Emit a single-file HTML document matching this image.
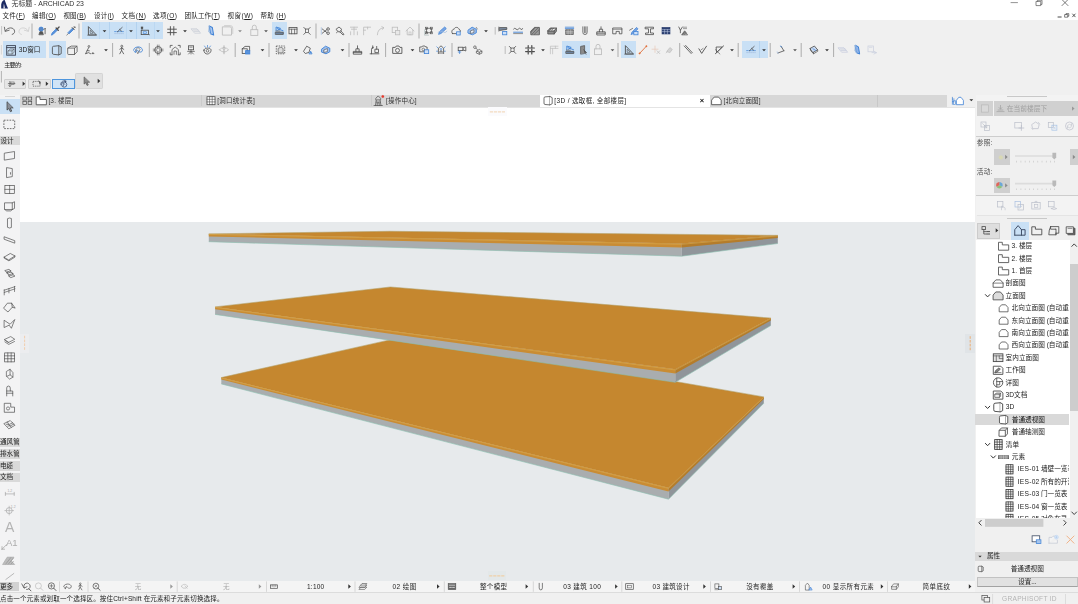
<!DOCTYPE html>
<html lang="zh"><head><meta charset="utf-8"><title>无标题 - ARCHICAD 23</title>
<style>
html,body{margin:0;padding:0;}
body{width:1078px;height:604px;overflow:hidden;position:relative;background:#f0f0f0;font-family:"Liberation Sans","Noto Sans CJK SC",sans-serif;}
body>div,#tx>div{position:absolute;box-sizing:border-box;}
#tx{left:0;top:0;width:1078px;height:604px;will-change:transform;}
.t{white-space:nowrap;line-height:12px;height:12px;letter-spacing:0;}
svg{position:absolute;left:0;top:0;}
</style></head><body>
<div style="left:0px;top:0px;width:1078px;height:20px;background:#ffffff;"></div>
<div style="left:0px;top:20px;width:1078px;height:75px;background:#f0f0f0;"></div>
<div style="left:0px;top:94.6px;width:946.5px;height:12.6px;background:#d7d7d7;"></div>
<div style="left:946.5px;top:94.6px;width:29px;height:12.6px;background:#f0f0f0;"></div>
<div style="left:0px;top:94.6px;width:19.5px;height:486px;background:#f3f3f4;"></div>
<div style="left:19.5px;top:107px;width:955.7px;height:115px;background:#ffffff;"></div>
<div style="left:19.5px;top:222.2px;width:955.7px;height:358.4px;background:#e7eaec;"></div>
<div style="left:975.2px;top:94.6px;width:103px;height:510px;background:#f0f0f0;"></div>
<div style="left:0px;top:580.6px;width:975.2px;height:11.7px;background:#f4f4f4;"></div>
<div style="left:0px;top:593px;width:1078px;height:11px;background:#f0f0f0;"></div>
<div style="left:82px;top:21.8px;width:81.3px;height:17.4px;background:#c9e0f5;"></div>
<div style="left:109.4px;top:21.8px;width:0.6px;height:17.4px;background:#b3d2ef;"></div>
<div style="left:136.4px;top:21.8px;width:0.6px;height:17.4px;background:#b3d2ef;"></div>
<div style="left:99.4px;top:21.8px;width:0.6px;height:17.4px;background:#bcd8f2;"></div>
<div style="left:126.4px;top:21.8px;width:0.6px;height:17.4px;background:#bcd8f2;"></div>
<div style="left:153.6px;top:21.8px;width:0.6px;height:17.4px;background:#bcd8f2;"></div>
<div style="left:272px;top:21.8px;width:14.9px;height:17px;background:#c9e0f5;"></div>
<div style="left:3.4px;top:41.3px;width:42.4px;height:17.2px;background:#c9e0f5;"></div>
<div style="left:49.2px;top:41.3px;width:16.4px;height:17.2px;background:#c9e0f5;"></div>
<div style="left:562px;top:41.3px;width:28px;height:17.2px;background:#c9e0f5;"></div>
<div style="left:621px;top:41.3px;width:14.8px;height:17.2px;background:#c9e0f5;"></div>
<div style="left:742px;top:41.3px;width:26.2px;height:17.2px;background:#c9e0f5;"></div>
<div style="left:759.3px;top:41.3px;width:0.6px;height:17.2px;background:#b3d2ef;"></div>
<div style="left:4.3px;top:79px;width:22.2px;height:10px;background:#e6e6e6;border:0.6px solid #cfcfcf;border-radius:1px;"></div>
<div style="left:28.2px;top:79px;width:22.5px;height:10px;background:#e6e6e6;border:0.6px solid #cfcfcf;border-radius:1px;"></div>
<div style="left:52px;top:78.8px;width:22.9px;height:10.3px;background:#d0e4f7;border:0.8px solid #4f96dd;"></div>
<div style="left:75.1px;top:73.1px;width:27.6px;height:16.4px;background:#e1e1e1;border:0.6px solid #d4d4d4;border-radius:1.2px;"></div>
<div style="left:540px;top:94.6px;width:170.4px;height:12.6px;background:#ffffff;"></div>
<div style="left:877.3px;top:94.6px;width:0.6px;height:12.6px;background:#c8c8c8;"></div>
<div style="left:201.3px;top:95.4px;width:0.5px;height:11px;background:#cbcbcb;"></div>
<div style="left:371px;top:95.4px;width:0.5px;height:11px;background:#cbcbcb;"></div>
<div style="left:19.5px;top:106.9px;width:955.7px;height:0.5px;background:#e4e4e4;"></div>
<div style="left:488.2px;top:107.2px;width:18.4px;height:9.2px;background:#fbfbfd;"></div>
<div style="left:487.6px;top:571.1999999999999px;width:18.4px;height:9.2px;background:#e3e8e9;"></div>
<div style="left:19.700000000000003px;top:334.0px;width:9.8px;height:18.6px;background:#ecedef;"></div>
<div style="left:965.3000000000001px;top:334.40000000000003px;width:9.8px;height:18.6px;background:#e0e4e7;"></div>
<div style="left:4.5px;top:95.8px;width:10px;height:0.7px;background:#d6d6d6;"></div>
<div style="left:0px;top:99.4px;width:19.5px;height:15px;background:#c9e0f5;"></div>
<div style="left:0px;top:136.3px;width:19.5px;height:8.6px;background:#d9d9d9;"></div>
<div style="left:0px;top:437.6px;width:19.5px;height:9.5px;background:#d9d9d9;"></div>
<div style="left:0px;top:449.3px;width:19.5px;height:9.5px;background:#d9d9d9;"></div>
<div style="left:0px;top:461.1px;width:19.5px;height:9.5px;background:#d9d9d9;"></div>
<div style="left:0px;top:472.6px;width:19.5px;height:9.5px;background:#d9d9d9;"></div>
<div style="left:0px;top:581.7px;width:19px;height:9.8px;background:#d2d2d2;"></div>
<div style="left:0px;top:592.1px;width:975.2px;height:0.6px;background:#dcdcdc;"></div>
<div style="left:975.6px;top:94.6px;width:102.4px;height:41.4px;background:#f3f3f3;"></div>
<div style="left:975.6px;top:195.9px;width:102.4px;height:19.4px;background:#f3f3f3;"></div>
<div style="left:1007.2px;top:96.2px;width:40px;height:0.8px;background:#c8c8c8;"></div>
<div style="left:977px;top:101.2px;width:16px;height:14.6px;background:#d2d2d2;"></div>
<div style="left:994px;top:101.2px;width:84px;height:14.6px;background:#d0d0d0;"></div>
<div style="left:975.6px;top:136px;width:102.4px;height:0.8px;background:#cdcdcd;"></div>
<div style="left:994px;top:149.2px;width:16px;height:15.6px;background:#cfcfcf;"></div>
<div style="left:1070px;top:149.2px;width:8px;height:15.6px;background:#cfcfcf;"></div>
<div style="left:994px;top:177.6px;width:16px;height:15.6px;background:#cfcfcf;"></div>
<div style="left:975.6px;top:195.1px;width:102.4px;height:0.8px;background:#cdcdcd;"></div>
<div style="left:976.5px;top:215.2px;width:101.5px;height:0.6px;background:#e4e4e4;"></div>
<div style="left:1007.2px;top:218px;width:40px;height:0.8px;background:#c8c8c8;"></div>
<div style="left:976.6px;top:222.6px;width:23.4px;height:16px;background:#dedede;border:0.6px solid #cccccc;"></div>
<div style="left:1011px;top:222px;width:17.6px;height:17.8px;background:#c9e0f5;"></div>
<div style="left:976px;top:239.8px;width:93.6px;height:278.4px;background:#ffffff;"></div>
<div style="left:1069.6px;top:239.8px;width:8.4px;height:278.4px;background:#f0f0f0;"></div>
<div style="left:1070.4px;top:264px;width:7.6px;height:147.4px;background:#cdcdcd;"></div>
<div style="left:975.2px;top:414px;width:94.3px;height:11.3px;background:#d9d9d9;"></div>
<div style="left:975.2px;top:552.4px;width:103px;height:8.2px;background:#d9d9d9;"></div>
<div style="left:976.6px;top:576.6px;width:101.4px;height:10.9px;background:#e1e1e1;border:0.6px solid #c2c2c2;border-bottom:0.8px solid #a2a2a2;"></div>
<div style="left:975.2px;top:592.3px;width:103px;height:0.5px;background:#dcdcdc;"></div>
<svg width="1078" height="604" viewBox="0 0 1078 604">
<g transform="translate(4.5,4.5)"><path d="M-3.3,4 L-3.3,0 Q-2.5,-4.5 0.2,-4.5 L2.2,1 L3.6,4 Z" fill="#1c2a63"/><path d="M-1.2,4 L-0.6,-1 L0.6,4Z" fill="#fff" opacity="0.85"/></g>
<path d="M1011,2.6 H1017.5" stroke="#666" stroke-width="0.7" fill="none" stroke-linejoin="round" stroke-linecap="round" />
<path d="M1036.4,1.4 H1040.8 V5.6 H1036.4 Z M1037.6,1.4 V0.2 H1042 V4.4 H1040.8" stroke="#555" stroke-width="0.7" fill="none" stroke-linejoin="round" stroke-linecap="round" />
<path d="M1062,-0.4 L1068,5.6 M1068,-0.4 L1062,5.6" stroke="#444" stroke-width="0.7" fill="none" stroke-linejoin="round" stroke-linecap="round" />
<path d="M1058,17 H1061.2" stroke="#333" stroke-width="0.9" fill="none" stroke-linejoin="round" stroke-linecap="round" />
<path d="M1065,14.6 H1067.8 V17.2 H1065 Z M1066,14.6 V13.6 H1068.8 V16.2 H1067.8" stroke="#333" stroke-width="0.6" fill="none" stroke-linejoin="round" stroke-linecap="round" />
<path d="M1072.6,14 L1075.2,16.8 M1075.2,14 L1072.6,16.8" stroke="#333" stroke-width="0.8" fill="none" stroke-linejoin="round" stroke-linecap="round" />
<line x1="1.6" y1="26" x2="1.6" y2="34.5" stroke="#a8a8a8" stroke-width="0.6"/>
<g transform="translate(9.6,30.6)"><path d="M-5.2,-3.4 L-4.4,0.8 L-0.4,-0.4 M-4.2,0.4 C-2,-4 4.6,-3.6 5,0.6 C5.2,2.4 4,3.4 2.6,3.8" stroke="#4d4d4d" stroke-width="0.8" fill="none" stroke-linejoin="round" stroke-linecap="round" /></g>
<g transform="translate(24,30.6)"><path d="M5.2,-3.4 L4.4,0.8 L0.4,-0.4 M4.2,0.4 C2,-4 -4.6,-3.6 -5,0.6 C-5.2,2.4 -4,3.4 -2.6,3.8" stroke="#cbcbcb" stroke-width="0.8" fill="none" stroke-linejoin="round" stroke-linecap="round" /></g>
<line x1="32" y1="23.5" x2="32" y2="38.5" stroke="#808080" stroke-width="0.6"/>
<g transform="translate(42.5,30.8)"><circle cx="-1.4" cy="-1.6" r="2.1" stroke="#3f82d6" stroke-width="0.9" fill="#5a88c4"/><path d="M-3.5,3.6 L-2.6,1 L0,1 L0.8,3.6 Z" stroke="#4d4d4d" stroke-width="0.7" fill="#555" stroke-linejoin="round" stroke-linecap="round" /><path d="M2.6,-2.4 V3 M1.6,-1.4 L2.6,-2.4" stroke="#4d4d4d" stroke-width="0.8" fill="none" stroke-linejoin="round" stroke-linecap="round" /></g>
<g transform="translate(55.5,30.8)"><path d="M-4,4 L-3.4,2.2 L1,-2.2 L2.2,-1 L-2.2,3.4 Z" stroke="#3f82d6" stroke-width="0.8" fill="#5b93dc" stroke-linejoin="round" stroke-linecap="round" /><path d="M0.6,-2.8 L2.8,-0.6 M1.6,-1.8 L3.6,-3.8" stroke="#4d4d4d" stroke-width="1.3" fill="none" stroke-linejoin="round" stroke-linecap="round" /></g>
<g transform="translate(71,30.8)"><path d="M-4.2,4.2 L-2.4,2.4" stroke="#4d4d4d" stroke-width="0.7" fill="none" stroke-linejoin="round" stroke-linecap="round" /><path d="M-2.8,1.6 L1.4,-2.6 L2.6,-1.4 L-1.6,2.8 Z" stroke="#3f82d6" stroke-width="0.8" fill="#5b93dc" stroke-linejoin="round" stroke-linecap="round" /><path d="M1,-3.4 L3.4,-1 M2.2,-2.2 L3.8,-3.8 M3,-4.4 L4.4,-3" stroke="#4d4d4d" stroke-width="0.8" fill="none" stroke-linejoin="round" stroke-linecap="round" /></g>
<line x1="79" y1="23.5" x2="79" y2="38.5" stroke="#808080" stroke-width="0.6"/>
<g transform="translate(92,30.8)"><path d="M-3.6,3.8 L-3.6,-4.2 L4,3.8 Z" stroke="#4d4d4d" stroke-width="0.9" fill="none" stroke-linejoin="round" stroke-linecap="round" /><path d="M-1.8,2.2 L-1.8,-0.6 L0.9,2.2 Z" stroke="#4d4d4d" stroke-width="0.6" fill="none" stroke-linejoin="round" stroke-linecap="round" /><path d="M-4.4,4.4 H4.6" stroke="#4d4d4d" stroke-width="0.6" fill="none" stroke-linejoin="round" stroke-linecap="round" /></g>
<g transform="translate(104.5,31.2)"><path d="M-1.9,-1 L1.9,-1 L0,1 Z" fill="#333"/></g>
<g transform="translate(119,30.8)"><path d="M-4.4,0.8 H4.4" stroke="#3f82d6" stroke-width="0.7" fill="none" stroke-linejoin="round" stroke-linecap="round" stroke-dasharray="1.6 1"/><path d="M-4.4,2.8 H4.4" stroke="#9db9dd" stroke-width="0.6" fill="none" stroke-linejoin="round" stroke-linecap="round" stroke-dasharray="1 1"/><path d="M-1.6,1 L3.2,-3.4 M0.6,-1.4 L2.6,0.4" stroke="#4d4d4d" stroke-width="0.8" fill="none" stroke-linejoin="round" stroke-linecap="round" /></g>
<g transform="translate(131,31.2)"><path d="M-1.9,-1 L1.9,-1 L0,1 Z" fill="#333"/></g>
<g transform="translate(145,30.8)"><rect x="-3.8" y="-0.6" width="7.2" height="4.4" stroke="#4d4d4d" stroke-width="0.8" fill="none" /><rect x="-3.8" y="-3.8" width="1.6" height="1.6" stroke="#4d4d4d" stroke-width="0.7" fill="#4d4d4d" /><path d="M-3,-2.2 V-0.6" stroke="#4d4d4d" stroke-width="0.7" fill="none" stroke-linejoin="round" stroke-linecap="round" /><rect x="-1.8" y="1" width="3.4" height="1.6" stroke="#3f82d6" stroke-width="0.6" fill="none" /><path d="M3.8,3.6 L4.6,4" stroke="#4d4d4d" stroke-width="0.6" fill="none" stroke-linejoin="round" stroke-linecap="round" /></g>
<g transform="translate(158,31.2)"><path d="M-1.9,-1 L1.9,-1 L0,1 Z" fill="#333"/></g>
<g transform="translate(172,30.8)"><path d="M-1.6,-4.2 V4.2 M1.8,-4.2 V4.2 M-4.4,-1.6 H4.4 M-4.4,1.8 H4.4" stroke="#4d4d4d" stroke-width="0.9" fill="none" stroke-linejoin="round" stroke-linecap="round" /></g>
<g transform="translate(185,31.2)"><path d="M-1.9,-1 L1.9,-1 L0,1 Z" fill="#333"/></g>
<g transform="translate(196,30.8)"><path d="M-4.6,-2 L1,-2 L4.6,2.4 L-1,2.4 Z M-3,-0.8 L2,-0.8 M-1.8,0.6 L3.2,0.6" stroke="#c7cbd6" stroke-width="0.7" fill="none" stroke-linejoin="round" stroke-linecap="round" /></g>
<g transform="translate(211.3,30.6) scale(1.3)"><path d="M-1.6,-3.6 L0.8,-2.4 L1.8,3.4 L-0.6,2.4 Z" stroke="#3f82d6" stroke-width="0.8" fill="#a9c6ee" stroke-linejoin="round" stroke-linecap="round" /><path d="M-1.6,-3.6 L-2,1 L-0.6,2.4" stroke="#9db9dd" stroke-width="0.7" fill="none" stroke-linejoin="round" stroke-linecap="round" /></g>
<g transform="translate(227,30.6) scale(1.25)"><path d="M-3.4,-3 H2.4 Q3.6,-3 3.6,-1.8 V3.6 H-3.4 Z" stroke="#bdbdbd" stroke-width="0.7" fill="none" stroke-linejoin="round" stroke-linecap="round" /><path d="M-2,-4 H2.6 Q4.6,-4 4.6,-2 V2.4" stroke="#bdbdbd" stroke-width="0.5" fill="none" stroke-linejoin="round" stroke-linecap="round" /></g>
<g transform="translate(240,31.2)"><path d="M-1.9,-1 L1.9,-1 L0,1 Z" fill="#8a8a8a"/></g>
<g transform="translate(254.3,30.4) scale(1.25)"><rect x="-2.8" y="-0.6" width="5.6" height="4.6" stroke="#bdbdbd" stroke-width="0.7" fill="none" /><path d="M-1.6,-0.6 V-2.6 Q-1.6,-4.2 0,-4.2 Q1.6,-4.2 1.6,-2.6 V-0.6" stroke="#bdbdbd" stroke-width="0.7" fill="none" stroke-linejoin="round" stroke-linecap="round" /></g>
<g transform="translate(266,31.2)"><path d="M-1.9,-1 L1.9,-1 L0,1 Z" fill="#555"/></g>
<g transform="translate(279.5,30.8)"><path d="M-3.8,3.6 H3.8 V1.4 H-3.8 Z" stroke="#4d4d4d" stroke-width="0.8" fill="#6e87a6" stroke-linejoin="round" stroke-linecap="round" /><path d="M-3.4,-0.4 L-3.4,-3.8 L1,-2.4 L-1.8,-0.6 M-2,-2.2 L3.6,0" stroke="#3f82d6" stroke-width="0.9" fill="none" stroke-linejoin="round" stroke-linecap="round" /><path d="M-3.6,0.2 H0.4" stroke="#4d4d4d" stroke-width="0.7" fill="none" stroke-linejoin="round" stroke-linecap="round" /></g>
<g transform="translate(293,30.8)"><rect x="-4" y="-3.4" width="8" height="6.4" stroke="#4d4d4d" stroke-width="0.8" fill="none" /><path d="M-4,-1.6 H4 M-1.4,-1.6 V3 M1.6,-1.6 V3" stroke="#4d4d4d" stroke-width="0.7" fill="none" stroke-linejoin="round" stroke-linecap="round" /></g>
<g transform="translate(307,30.8)"><path d="M-3.2,-3.4 L-1.4,-1.6 M3.2,-3.4 L1.4,-1.6 M-3.2,3.6 L-1.4,1.8 M3.2,3.6 L1.4,1.8" stroke="#4d4d4d" stroke-width="0.8" fill="none" stroke-linejoin="round" stroke-linecap="round" /><rect x="-1.6" y="-1.8" width="3.2" height="3.6" stroke="#4d4d4d" stroke-width="0.7" fill="none" /></g>
<line x1="316" y1="23.5" x2="316" y2="38.5" stroke="#808080" stroke-width="0.6"/>
<g transform="translate(325.5,30.8)"><path d="M-4.2,-3.2 V3.6" stroke="#9db9dd" stroke-width="0.7" fill="none" stroke-linejoin="round" stroke-linecap="round" /><circle cx="2.6" cy="-1.8" r="1.3" stroke="#4d4d4d" stroke-width="0.8" fill="none"/><circle cx="2.6" cy="2.4" r="1.3" stroke="#4d4d4d" stroke-width="0.8" fill="none"/><path d="M1.4,-1.2 L-3.2,2.4 M1.4,1.8 L-3.2,-1.8" stroke="#4d4d4d" stroke-width="0.8" fill="none" stroke-linejoin="round" stroke-linecap="round" /></g>
<g transform="translate(340,30.8)"><path d="M-3.8,-1.6 L-1,-3.8 L2,-1.2 L-0.6,1.2 Z" stroke="#4d4d4d" stroke-width="0.8" fill="none" stroke-linejoin="round" stroke-linecap="round" /><path d="M0.8,0 L4,3.6 L3,4.2 L-0.2,1" stroke="#4d4d4d" stroke-width="0.8" fill="none" stroke-linejoin="round" stroke-linecap="round" /><path d="M-3.6,2 L-2,0.6" stroke="#4d4d4d" stroke-width="0.7" fill="none" stroke-linejoin="round" stroke-linecap="round" /></g>
<g transform="translate(354,30.8)"><path d="M-3.6,-3.6 H3.6 M-2.6,-1.6 H2.6 M0,-3.6 V4 M-3.4,4 V1 M3.4,4 V1" stroke="#bdbdbd" stroke-width="0.8" fill="none" stroke-linejoin="round" stroke-linecap="round" /></g>
<g transform="translate(367,30.8)"><path d="M-3.4,4 V-3.6 H3.6 M-3.4,-0.6 H-1.4 M0.6,-3.6 V-1.8" stroke="#bdbdbd" stroke-width="0.8" fill="none" stroke-linejoin="round" stroke-linecap="round" /></g>
<g transform="translate(381,30.8)"><path d="M-3.6,4 Q-3.4,-2.4 2.4,-3 M0.8,-4.2 L3,-3 L1.2,-1.4" stroke="#bdbdbd" stroke-width="0.8" fill="none" stroke-linejoin="round" stroke-linecap="round" /></g>
<g transform="translate(396,30.8)"><rect x="-3.8" y="-3.6" width="5.4" height="5.4" stroke="#bdbdbd" stroke-width="0.8" fill="none" /><rect x="-0.6" y="-0.4" width="4.4" height="4.4" stroke="#bdbdbd" stroke-width="0.8" fill="#e9e9e9" /></g>
<g transform="translate(410,30.8)"><path d="M-4,0.2 L0,-3.8 L4,0.2 M-2.8,-0.6 V4 H2.8 V-0.6" stroke="#bdbdbd" stroke-width="0.8" fill="none" stroke-linejoin="round" stroke-linecap="round" /><rect x="-1" y="1.2" width="2" height="2.8" stroke="#bdbdbd" stroke-width="0.6" fill="none" /></g>
<line x1="419" y1="23.5" x2="419" y2="38.5" stroke="#808080" stroke-width="0.6"/>
<g transform="translate(429,30.8)"><rect x="-2.4" y="-2.6" width="5" height="4.6" stroke="#4d4d4d" stroke-width="0.7" fill="none" /><rect x="-3.4" y="-3.6" width="2" height="2" stroke="#4d4d4d" stroke-width="0.6" fill="none" /><rect x="1.6" y="-3.6" width="2" height="2" stroke="#4d4d4d" stroke-width="0.6" fill="none" /><rect x="-3.4" y="1" width="2" height="2" stroke="#4d4d4d" stroke-width="0.6" fill="none" /><rect x="1.6" y="1" width="2" height="2" stroke="#4d4d4d" stroke-width="0.6" fill="none" /><path d="M-4.4,-1 V3.8 M-4.4,4.4 H-0.4" stroke="#9aa" stroke-width="0.5" fill="none" stroke-linejoin="round" stroke-linecap="round" /></g>
<g transform="translate(442.5,30.8)"><path d="M-3.8,3.2 L-2.8,0.6 L2.2,-3.8 L3.8,-2.2 L-1.2,2.4 Z" stroke="#3f82d6" stroke-width="0.8" fill="#7aa6e4" stroke-linejoin="round" stroke-linecap="round" /><path d="M-4.4,1.4 Q-2,-0.8 0.4,1 T4.4,0.6" stroke="#9db9dd" stroke-width="0.7" fill="none" stroke-linejoin="round" stroke-linecap="round" /></g>
<g transform="translate(456,30.8)"><path d="M-3.6,2.8 H1 M-3.6,2.8 C-5,0.6 -3.8,-1.6 -2,-1.4 C-1.6,-4 2.4,-4.2 3,-1.4 C4.8,-1 4.8,1 3.8,1.6" stroke="#4d4d4d" stroke-width="0.8" fill="none" stroke-linejoin="round" stroke-linecap="round" /><rect x="0.6" y="1" width="3.6" height="3.2" stroke="#3f82d6" stroke-width="0.8" fill="#cfe0f7" /></g>
<g transform="translate(472.5,30.8)"><path d="M-4.2,-0.8 L-0.4,-3.6 L3.8,-1.6 L3.8,2 L0,4 L-4.2,2.4 Z" stroke="#3f82d6" stroke-width="0.9" fill="#9dbfee" stroke-linejoin="round" stroke-linecap="round" /><path d="M-1.8,0 L1.4,-1.2 L1.4,1.8 L-1.8,2.6 Z" stroke="#4d4d4d" stroke-width="0.6" fill="#e8eef8" stroke-linejoin="round" stroke-linecap="round" /><path d="M3.8,-3.4 L4.8,-1.8" stroke="#4d4d4d" stroke-width="0.6" fill="none" stroke-linejoin="round" stroke-linecap="round" /></g>
<g transform="translate(486,31.2)"><path d="M-1.9,-1 L1.9,-1 L0,1 Z" fill="#333"/></g>
<line x1="495.2" y1="27" x2="495.2" y2="34.6" stroke="#9a9a9a" stroke-width="0.6"/>
<g transform="translate(503,30.8)"><path d="M-3.4,-3.2 L3.8,-3.2 L3.8,-1.4 L-3.4,-0.4 Z" stroke="#4d4d4d" stroke-width="0.8" fill="#7d8da3" stroke-linejoin="round" stroke-linecap="round" /><rect x="-0.4" y="0.6" width="4.2" height="3.4" stroke="#3f82d6" stroke-width="0.8" fill="#cfe0f7" /><path d="M-4.2,-3.8 V0.4" stroke="#4d4d4d" stroke-width="0.6" fill="none" stroke-linejoin="round" stroke-linecap="round" /></g>
<g transform="translate(518,30.8)"><path d="M-4.4,-1.8 Q-3.2,-3.4 -2,-1.8 T0.4,-1.8 T2.8,-1.8 T4.6,-2.2" stroke="#4d4d4d" stroke-width="0.8" fill="none" stroke-linejoin="round" stroke-linecap="round" /><path d="M-4.4,1.4 H4.6" stroke="#3f82d6" stroke-width="0.9" fill="none" stroke-linejoin="round" stroke-linecap="round" /><path d="M-4.4,2.8 H4.6" stroke="#4d4d4d" stroke-width="0.6" fill="none" stroke-linejoin="round" stroke-linecap="round" /></g>
<g transform="translate(535,30.8)"><path d="M-4.2,3.6 L-4.2,0.4 L-0.6,-3.4 L4.4,-3.4 L4.4,3.6 Z" stroke="#4d4d4d" stroke-width="0.8" fill="#9a9a9a" stroke-linejoin="round" stroke-linecap="round" /><path d="M-3,3.4 L3,-3 M-0.6,3.4 L4,-1 M-4,1.6 L0,-3" stroke="#4d4d4d" stroke-width="0.6" fill="none" stroke-linejoin="round" stroke-linecap="round" /></g>
<g transform="translate(552,30.8)"><path d="M-4.2,0 L-1.8,-2.8 L4.4,-2.8 L2.2,0 Z M-4.2,0 V3.2 L2.2,3.2 L4.4,0.4 V-2.8 M2.2,0 V3.2" stroke="#4d4d4d" stroke-width="0.8" fill="#8f8f8f" stroke-linejoin="round" stroke-linecap="round" /><path d="M-2.6,0 L-0.6,-2.8 M-0.4,0 L1.6,-2.8" stroke="#4d4d4d" stroke-width="0.5" fill="none" stroke-linejoin="round" stroke-linecap="round" /></g>
<g transform="translate(569.5,30.8)"><path d="M-4.2,-3.6 H4.2 M-4.2,-2.2 H4.2" stroke="#3f82d6" stroke-width="0.8" fill="none" stroke-linejoin="round" stroke-linecap="round" /><rect x="-3.8" y="-1" width="7.6" height="4.6" stroke="#4d4d4d" stroke-width="0.7" fill="#8a8a8a" /><path d="M-3.8,0.6 H3.8 M-3.8,2.2 H3.8 M-1.4,-1 V3.6 M1.2,-1 V3.6" stroke="#ddd" stroke-width="0.4" fill="none" stroke-linejoin="round" stroke-linecap="round" /></g>
<g transform="translate(585,30.8)"><path d="M-2.2,-4 V1.4 Q-2.2,3.8 0,3.8 Q2.2,3.8 2.2,1.4 V-4 M-0.6,-4 V2 M0.8,-4 V2" stroke="#4d4d4d" stroke-width="0.7" fill="none" stroke-linejoin="round" stroke-linecap="round" /></g>
<g transform="translate(601,30.8)"><path d="M-4.2,3.8 V1 H4.2 V3.8 Z M-1.6,1 V-1.6 H1.6 V1 M0,-1.6 V-4 M-4.2,2.4 H4.2" stroke="#4d4d4d" stroke-width="0.8" fill="none" stroke-linejoin="round" stroke-linecap="round" /></g>
<g transform="translate(617.5,30.8)"><path d="M-4.4,-2.8 H4.4 V3 H1.8 V0.6 H-1.4 V3 H-4.4 Z" stroke="#4d4d4d" stroke-width="0.8" fill="none" stroke-linejoin="round" stroke-linecap="round" /><path d="M-4.4,-1.4 H4.4" stroke="#4d4d4d" stroke-width="0.5" fill="none" stroke-linejoin="round" stroke-linecap="round" /></g>
<g transform="translate(634,30.8)"><path d="M-2.8,3.4 L-2,1.4 L2.6,-3.4 L4,-2 L-0.6,2.6 Z" stroke="#3f82d6" stroke-width="0.8" fill="#7aa6e4" stroke-linejoin="round" stroke-linecap="round" /><rect x="-0.2" y="0.8" width="4.2" height="3.2" stroke="#3f82d6" stroke-width="0.8" fill="#cfe0f7" /><path d="M-4.4,-0.6 L-1.4,-2.4" stroke="#4d4d4d" stroke-width="0.7" fill="none" stroke-linejoin="round" stroke-linecap="round" /></g>
<g transform="translate(649.5,30.8)"><path d="M-4,-3.6 H4 V-2 H1 V2.2 H4 V3.8 H-4 V2.2 H-1 V-2 H-4 Z" stroke="#4d4d4d" stroke-width="0.8" fill="none" stroke-linejoin="round" stroke-linecap="round" /></g>
<g transform="translate(666,30.8)"><rect x="-4" y="-3.4" width="8" height="6.6" stroke="#27396b" stroke-width="0.6" fill="#2d4172" /><path d="M-4,-1.2 H4 M-4,0.8 H4 M-1.4,-1.2 V3.2 M1.4,-1.2 V3.2" stroke="#c8d2ea" stroke-width="0.5" fill="none" stroke-linejoin="round" stroke-linecap="round" /></g>
<g transform="translate(683,30.8)"><path d="M-4.2,-3.8 L-2.6,-0.6 L-0.6,-3.8 M-2.6,-0.6 V2" stroke="#4d4d4d" stroke-width="0.8" fill="none" stroke-linejoin="round" stroke-linecap="round" /><path d="M0.4,-3.6 H3.6 M0.4,-2.2 H3.6" stroke="#4d4d4d" stroke-width="0.5" fill="none" stroke-linejoin="round" stroke-linecap="round" /><path d="M-1.2,3.8 L1.6,0 L4.4,3.8 Z M-0.4,3.8 L2,0.8 M1.2,3.8 L3,1.6" stroke="#4d4d4d" stroke-width="0.6" fill="#999" stroke-linejoin="round" stroke-linecap="round" /></g>
<line x1="1.4" y1="45" x2="1.4" y2="54.5" stroke="#c4c4c4" stroke-width="0.6"/>
<g transform="translate(11.1,50.4)"><rect x="-4.4" y="-4.8" width="8.8" height="9.6" stroke="#3c4354" stroke-width="0.9" fill="none" /><path d="M-4.4,-2.8 H4.4" stroke="#3c4354" stroke-width="0.9" fill="none" stroke-linejoin="round" stroke-linecap="round" /><path d="M-2.8,0.4 L-0.8,-1.4 H3 V2 L1,3.6 H-2.8 Z M-2.8,0.4 H1 V3.6 M1,0.4 L3,-1.4" stroke="#4d4d4d" stroke-width="0.55" fill="none" stroke-linejoin="round" stroke-linecap="round" /></g>
<g transform="translate(56.6,50.3)"><path d="M-4.2,-3 Q-4.2,-4 -3.2,-4 L2.2,-4.6 V4.6 L-3.2,4 Q-4.2,4 -4.2,3 Z" stroke="#4d4d4d" stroke-width="0.85" fill="none" stroke-linejoin="round" stroke-linecap="round" /><path d="M2.2,-4.6 L4.6,-3.4 V3.4 L2.2,4.6" stroke="#4d4d4d" stroke-width="0.85" fill="none" stroke-linejoin="round" stroke-linecap="round" /></g>
<g transform="translate(72.3,50.3)"><path d="M-4.6,-1.8 Q-4.6,-2.4 -4,-2.6 L-1,-4.2 H4.2 Q4.8,-4.2 4.8,-3.6 V1.4 L2.2,4.2 H-4 Q-4.6,4.2 -4.6,3.6 Z M-4.4,-2.2 H2.2 V4.2 M2.2,-2.2 L4.6,-4" stroke="#4d4d4d" stroke-width="0.75" fill="none" stroke-linejoin="round" stroke-linecap="round" /></g>
<g transform="translate(89.5,49.8)"><circle cx="-0.6" cy="-3.4" r="0.9" stroke="#4d4d4d" stroke-width="0.7" fill="none"/><path d="M-0.8,-2.2 L-2.4,0.8 L-0.2,1 M-2.4,0.8 L-3.8,3.8 M-3.8,3.8 Q-0.6,1.6 1.2,3.8" stroke="#4d4d4d" stroke-width="0.8" fill="none" stroke-linejoin="round" stroke-linecap="round" /><path d="M2.4,3.8 H4.4 M3.4,2.6 V3.8" stroke="#4d4d4d" stroke-width="0.7" fill="none" stroke-linejoin="round" stroke-linecap="round" /></g>
<g transform="translate(106,50.2)"><path d="M-1.9,-1 L1.9,-1 L0,1 Z" fill="#333"/></g>
<line x1="112.6" y1="43" x2="112.6" y2="57" stroke="#808080" stroke-width="0.6"/>
<g transform="translate(122,49.8)"><circle cx="-0.2" cy="-3.6" r="1" stroke="#4d4d4d" stroke-width="0.7" fill="none"/><path d="M-0.2,-2.4 L-0.4,0.6 L-2.2,4 M-0.4,0.6 L1.6,4 M-2.2,-0.6 L-0.2,-1.8 L1.8,-0.4" stroke="#4d4d4d" stroke-width="0.8" fill="none" stroke-linejoin="round" stroke-linecap="round" /></g>
<g transform="translate(138,49.8)"><path d="M-4.4,0.4 C-4.4,-4 4.4,-4 4.4,0.4 C4.4,2.6 1,3 0,1 C-1,-1 -3.4,0.4 -2.6,2.4" stroke="#3f82d6" stroke-width="0.9" fill="none" stroke-linejoin="round" stroke-linecap="round" /><path d="M-2,-0.4 L0,-2.4 L2,-0.4 L0,3.6 Z" stroke="#4d4d4d" stroke-width="0.6" fill="none" stroke-linejoin="round" stroke-linecap="round" /><path d="M-3.8,1.6 L-2.6,2.6 L-1.6,1.4" stroke="#3f82d6" stroke-width="0.7" fill="none" stroke-linejoin="round" stroke-linecap="round" /></g>
<line x1="149.3" y1="43" x2="149.3" y2="57" stroke="#808080" stroke-width="0.6"/>
<g transform="translate(158.2,50.0)"><circle cx="0" cy="0" r="3.5" stroke="#4d4d4d" stroke-width="0.8" fill="none"/><path d="M-5,-0.8 H5 M-5,0.8 H5 M-0.8,-5 V5 M0.8,-5 V5" stroke="#4d4d4d" stroke-width="0.55" fill="none" stroke-linejoin="round" stroke-linecap="round" /><circle cx="0" cy="0" r="1.2" stroke="#f0f0f0" stroke-width="0.1" fill="#f0f0f0"/></g>
<g transform="translate(175.2,50.0)"><path d="M-5,-2.6 V-4.6 H-3 M3,-4.6 H5 V-2.6 M-5,2.8 V4.8 H-3 M3,4.8 H5 V2.8" stroke="#4d4d4d" stroke-width="0.8" fill="none" stroke-linejoin="round" stroke-linecap="round" /><path d="M-3.2,4.4 V-0.4 L0,-3 L3.2,-0.4 V4.4 M-1.2,4.4 V1 H1.2 V4.4" stroke="#4d4d4d" stroke-width="0.7" fill="none" stroke-linejoin="round" stroke-linecap="round" /></g>
<g transform="translate(191,49.8)"><rect x="-2.6" y="-4" width="5.2" height="4" stroke="#4d4d4d" stroke-width="0.8" fill="none" /><path d="M-1.2,-2.6 H1.2" stroke="#4d4d4d" stroke-width="0.6" fill="none" stroke-linejoin="round" stroke-linecap="round" /><path d="M0,0 V4.2 M-3.4,1.6 H3.4 M-2.4,4.2 L0,1.6 L2.4,4.2" stroke="#4d4d4d" stroke-width="0.7" fill="none" stroke-linejoin="round" stroke-linecap="round" /></g>
<g transform="translate(207.5,49.8)"><path d="M-3,-3.8 L-2,-2.4 M0,-4.4 V-2.8 M3,-3.8 L2,-2.4" stroke="#3f82d6" stroke-width="0.7" fill="none" stroke-linejoin="round" stroke-linecap="round" /><path d="M-3.6,0.4 C-3.6,-2.4 3.6,-2.4 3.6,0.4 C3.6,3 1,4.2 0,4.2 C-2,4.2 -3.6,3 -3.6,0.4 Z" stroke="#4d4d4d" stroke-width="0.8" fill="none" stroke-linejoin="round" stroke-linecap="round" /><circle cx="0" cy="1" r="1.3" stroke="#4d4d4d" stroke-width="0.7" fill="none"/></g>
<g transform="translate(224,49.8)"><path d="M-4.6,0 Q0,-4.6 4.6,0 Q0,4.6 -4.6,0 Z" stroke="#bdbdbd" stroke-width="0.8" fill="none" stroke-linejoin="round" stroke-linecap="round" /><path d="M0,-4 V4" stroke="#999" stroke-width="0.7" fill="none" stroke-linejoin="round" stroke-linecap="round" /><path d="M-1.6,-1.4 L0,0.4 L1.6,-1.4" stroke="#bdbdbd" stroke-width="0.6" fill="none" stroke-linejoin="round" stroke-linecap="round" /></g>
<line x1="235.2" y1="43" x2="235.2" y2="57" stroke="#808080" stroke-width="0.6"/>
<g transform="translate(246,49.8)"><path d="M-3.8,-1 L-1,-3.4 H3.6 V1" stroke="#4d4d4d" stroke-width="0.8" fill="none" stroke-linejoin="round" stroke-linecap="round" /><rect x="-3.8" y="-1" width="5" height="4.6" stroke="#4d4d4d" stroke-width="0.8" fill="none" /><rect x="-0.4" y="0.8" width="4.2" height="3.4" stroke="#3f82d6" stroke-width="0.8" fill="#5b93dc" /></g>
<g transform="translate(262.5,50.2)"><path d="M-1.9,-1 L1.9,-1 L0,1 Z" fill="#333"/></g>
<line x1="269" y1="43" x2="269" y2="57" stroke="#808080" stroke-width="0.6"/>
<g transform="translate(280.5,49.8)"><rect x="-4.2" y="-3.8" width="8.4" height="7.8" stroke="#4d4d4d" stroke-width="0.8" fill="none" stroke-dasharray="1.4 1"/><path d="M-2.4,2.6 V-1.4 L0.4,-2.6 L2.6,-1.4 V2.6 Z" stroke="#4d4d4d" stroke-width="0.6" fill="#dcdcdc" stroke-linejoin="round" stroke-linecap="round" /></g>
<g transform="translate(296,50.2)"><path d="M-1.9,-1 L1.9,-1 L0,1 Z" fill="#333"/></g>
<g transform="translate(307.5,49.8)"><path d="M-3.8,1.2 L-0.8,-3.6 L2.8,-1.6 L1.4,2.6 L-1.8,3.6 Z" stroke="#4d4d4d" stroke-width="0.8" fill="none" stroke-linejoin="round" stroke-linecap="round" /><path d="M1.6,3.8 L3.2,1.4 L4.4,3.8 Z" stroke="#3f82d6" stroke-width="0.7" fill="#5b93dc" stroke-linejoin="round" stroke-linecap="round" /></g>
<g transform="translate(326,49.8)"><path d="M-4.2,-0.8 L-0.4,-3.6 L3.8,-1.6 L3.8,2 L0,4 L-4.2,2.4 Z" stroke="#3f82d6" stroke-width="0.9" fill="#9dbfee" stroke-linejoin="round" stroke-linecap="round" /><path d="M-1.8,0 L1.4,-1.2 L1.4,1.8 L-1.8,2.6 Z" stroke="#4d4d4d" stroke-width="0.6" fill="#e8eef8" stroke-linejoin="round" stroke-linecap="round" /></g>
<g transform="translate(342.5,50.2)"><path d="M-1.9,-1 L1.9,-1 L0,1 Z" fill="#333"/></g>
<line x1="349" y1="43" x2="349" y2="57" stroke="#808080" stroke-width="0.6"/>
<g transform="translate(357.5,49.8)"><path d="M-4.2,4 V1.6 H4.2 V4 Z M-1.6,1.6 V-1 H1.6 V1.6 M0,-1 V-4 M-4.2,2.8 H4.2" stroke="#4d4d4d" stroke-width="0.8" fill="none" stroke-linejoin="round" stroke-linecap="round" /></g>
<g transform="translate(374.5,49.8)"><path d="M-4.4,4 H4.4 M-3,4 V-0.6 Q-3,-2.6 -1,-2.6 M-1.8,-4 V-1.2" stroke="#4d4d4d" stroke-width="0.8" fill="none" stroke-linejoin="round" stroke-linecap="round" /><path d="M0.4,2.4 V-0.6 H4 V2.4 Z M2.2,-0.6 V-3.4" stroke="#4d4d4d" stroke-width="0.8" fill="none" stroke-linejoin="round" stroke-linecap="round" /></g>
<line x1="385.6" y1="43" x2="385.6" y2="57" stroke="#808080" stroke-width="0.6"/>
<g transform="translate(397.5,49.8)"><path d="M-4.4,-2.4 H-2.2 L-1.2,-3.8 H1.4 L2.4,-2.4 H4.4 V3.6 H-4.4 Z" stroke="#4d4d4d" stroke-width="0.85" fill="none" stroke-linejoin="round" stroke-linecap="round" /><circle cx="0" cy="0.6" r="2" stroke="#4d4d4d" stroke-width="0.8" fill="none"/></g>
<g transform="translate(412.5,50.2)"><path d="M-1.9,-1 L1.9,-1 L0,1 Z" fill="#333"/></g>
<g transform="translate(424.5,49.8)"><path d="M-4.4,-2.8 H-2.8 L-2,-3.8 H0.4 L1.2,-2.8 H2.6 V2 H-4.4 Z" stroke="#4d4d4d" stroke-width="0.8" fill="none" stroke-linejoin="round" stroke-linecap="round" /><rect x="-0.2" y="0" width="4.4" height="3.8" stroke="#3f82d6" stroke-width="0.8" fill="#cfe0f7" /><circle cx="-1.2" cy="-0.4" r="1.3" stroke="#4d4d4d" stroke-width="0.6" fill="none"/></g>
<g transform="translate(441,49.8)"><path d="M-2.6,3.8 V-1.6 L0,-4 L2.6,-1.6 V3.8 M-1,3.8 V1.2 H1 V3.8" stroke="#4d4d4d" stroke-width="0.8" fill="none" stroke-linejoin="round" stroke-linecap="round" /><path d="M-4.2,-3 L-3.2,-2 M4.2,-3 L3.2,-2 M-4.4,1.4 H-3.4 M4.4,1.4 H3.4" stroke="#3f82d6" stroke-width="0.7" fill="none" stroke-linejoin="round" stroke-linecap="round" /><circle cx="0" cy="-0.6" r="0.9" stroke="#3f82d6" stroke-width="0.6" fill="none"/></g>
<line x1="452" y1="43" x2="452" y2="57" stroke="#808080" stroke-width="0.6"/>
<g transform="translate(462,49.8)"><rect x="-3.8" y="-2.6" width="4.8" height="3.4" stroke="#4d4d4d" stroke-width="0.8" fill="none" /><path d="M1,-1.8 L3.8,-3 V1.2 L1,0" stroke="#4d4d4d" stroke-width="0.8" fill="none" stroke-linejoin="round" stroke-linecap="round" /><path d="M-3.8,2.2 H-1.2 M-2.4,0.8 V3.8" stroke="#3f82d6" stroke-width="0.7" fill="none" stroke-linejoin="round" stroke-linecap="round" /></g>
<g transform="translate(477.5,49.8)"><circle cx="-2.6" cy="-2.6" r="1.3" stroke="#4d4d4d" stroke-width="0.7" fill="none"/><path d="M-1.6,-1.6 L0,-0.2" stroke="#4d4d4d" stroke-width="0.7" fill="none" stroke-linejoin="round" stroke-linecap="round" /><path d="M-0.8,1.4 L1.8,-0.4 L4.4,1.4 V3.4 L1.8,4.4 L-0.8,3.4 Z M-0.8,1.4 L1.8,2.4 L4.4,1.4 M1.8,2.4 V4.4" stroke="#4d4d4d" stroke-width="0.7" fill="none" stroke-linejoin="round" stroke-linecap="round" /></g>
<line x1="505.2" y1="46" x2="505.2" y2="54" stroke="#9a9a9a" stroke-width="0.6"/>
<g transform="translate(512.5,49.8)"><path d="M-3.2,-3.4 L-1.4,-1.6 M3.2,-3.4 L1.4,-1.6 M-3.2,3.6 L-1.4,1.8 M3.2,3.6 L1.4,1.8" stroke="#4d4d4d" stroke-width="0.8" fill="none" stroke-linejoin="round" stroke-linecap="round" /><rect x="-1.6" y="-1.8" width="3.2" height="3.6" stroke="#4d4d4d" stroke-width="0.7" fill="none" /></g>
<g transform="translate(530,49.8)"><path d="M-1.8,-4.2 V4.2 M1.8,-4.2 V4.2 M-4.4,-1.8 H4.4 M-4.4,1.8 H4.4" stroke="#4d4d4d" stroke-width="1.2" fill="none" stroke-linejoin="round" stroke-linecap="round" stroke-dasharray="2 1.4"/></g>
<g transform="translate(543,50.2)"><path d="M-1.9,-1 L1.9,-1 L0,1 Z" fill="#333"/></g>
<g transform="translate(554,49.8)"><path d="M-3.6,4 V-3.6 H4 M-1.4,4 V-1.4 H4 M-3.6,-1.4 H-1.4 M1.4,-3.6 V-1.4" stroke="#bdbdbd" stroke-width="0.7" fill="none" stroke-linejoin="round" stroke-linecap="round" /></g>
<g transform="translate(570,49.8)"><path d="M-3.8,3.6 H3.8 V1.6 H-3.8 Z" stroke="#4d4d4d" stroke-width="0.8" fill="#6e87a6" stroke-linejoin="round" stroke-linecap="round" /><path d="M-3.2,-0.2 L-3.2,-3.8 L1.2,-2.4 L-1.6,-0.6 M-2,-2.2 L3.6,0" stroke="#3f82d6" stroke-width="0.9" fill="none" stroke-linejoin="round" stroke-linecap="round" /><path d="M-3.6,0.4 H0.4" stroke="#4d4d4d" stroke-width="0.7" fill="none" stroke-linejoin="round" stroke-linecap="round" /></g>
<g transform="translate(583,49.8)"><path d="M-2.4,4 V-3.4 L1.6,-4.2 V3.4 Z" stroke="#4d4d4d" stroke-width="0.7" fill="#8b8b8b" stroke-linejoin="round" stroke-linecap="round" /><path d="M0.6,0 L3.6,2.8 L2.2,2.8 L3,4.4" stroke="#4d4d4d" stroke-width="0.7" fill="#444" stroke-linejoin="round" stroke-linecap="round" /></g>
<g transform="translate(598,49.599999999999994) scale(1.25)"><rect x="-2.8" y="-0.6" width="5.6" height="4.6" stroke="#bdbdbd" stroke-width="0.7" fill="none" /><path d="M-1.6,-0.6 V-2.6 Q-1.6,-4.2 0,-4.2 Q1.6,-4.2 1.6,-2.6 V-0.6" stroke="#bdbdbd" stroke-width="0.7" fill="none" stroke-linejoin="round" stroke-linecap="round" /></g>
<g transform="translate(612.5,50.2)"><path d="M-1.9,-1 L1.9,-1 L0,1 Z" fill="#555"/></g>
<line x1="618" y1="43" x2="618" y2="57" stroke="#808080" stroke-width="0.6"/>
<g transform="translate(629,49.8)"><path d="M-3.6,3.8 L-3.6,-4.2 L4,3.8 Z" stroke="#4d4d4d" stroke-width="0.9" fill="none" stroke-linejoin="round" stroke-linecap="round" /><path d="M-1.8,2.2 L-1.8,-0.6 L0.9,2.2 Z" stroke="#4d4d4d" stroke-width="0.6" fill="none" stroke-linejoin="round" stroke-linecap="round" /><path d="M-4.4,4.4 H4.6" stroke="#4d4d4d" stroke-width="0.6" fill="none" stroke-linejoin="round" stroke-linecap="round" /></g>
<g transform="translate(643,49.8)"><path d="M-3.2,3.4 L3.2,-3.4" stroke="#e0703c" stroke-width="0.9" fill="none" stroke-linejoin="round" stroke-linecap="round" /><circle cx="-3.4" cy="3.6" r="0.7" stroke="#e0703c" stroke-width="0.5" fill="#e0703c"/><circle cx="3.4" cy="-3.6" r="0.7" stroke="#e0703c" stroke-width="0.5" fill="#e0703c"/></g>
<g transform="translate(656,49.8)"><path d="M-4,-0.6 H2 M-1,-3.8 V2.6" stroke="#e6c8b8" stroke-width="0.7" fill="none" stroke-linejoin="round" stroke-linecap="round" /><path d="M1,1 L3.8,3.8 M3.8,1 L1,3.8" stroke="#bdbdbd" stroke-width="0.7" fill="none" stroke-linejoin="round" stroke-linecap="round" /></g>
<g transform="translate(669.5,49.8)"><path d="M-2.6,1.4 L0.4,-2.2 L2.8,-0.4 L0.6,2.6 Z" stroke="#bdbdbd" stroke-width="0.7" fill="#d4d4d4" stroke-linejoin="round" stroke-linecap="round" /><path d="M-3.4,3 L-2,1.8" stroke="#bdbdbd" stroke-width="0.7" fill="none" stroke-linejoin="round" stroke-linecap="round" /></g>
<line x1="679.7" y1="43" x2="679.7" y2="57" stroke="#808080" stroke-width="0.6"/>
<g transform="translate(688,49.8)"><path d="M-3.8,-3.8 L3.2,3.8 M-2.4,-4.4 L4.4,3" stroke="#4d4d4d" stroke-width="0.8" fill="none" stroke-linejoin="round" stroke-linecap="round" /></g>
<g transform="translate(702.5,49.8)"><path d="M-3.6,-1 L-0.8,3.6 L4,-3.6" stroke="#4d4d4d" stroke-width="0.9" fill="none" stroke-linejoin="round" stroke-linecap="round" /><path d="M-1.4,0 L0.6,-1.4" stroke="#4d4d4d" stroke-width="0.6" fill="none" stroke-linejoin="round" stroke-linecap="round" /></g>
<g transform="translate(719.5,49.8)"><path d="M-4.2,4 L4.2,-4 M-3,-2.8 H2.8 L-2.6,2.6 Z" stroke="#4d4d4d" stroke-width="0.8" fill="none" stroke-linejoin="round" stroke-linecap="round" /><path d="M-4.2,-0.2 L0.4,4.2" stroke="#4d4d4d" stroke-width="0.6" fill="none" stroke-linejoin="round" stroke-linecap="round" /></g>
<g transform="translate(732,50.2)"><path d="M-1.9,-1 L1.9,-1 L0,1 Z" fill="#333"/></g>
<line x1="738.2" y1="43" x2="738.2" y2="57" stroke="#808080" stroke-width="0.6"/>
<g transform="translate(751,49.8)"><path d="M-4.4,0.8 H4.4" stroke="#3f82d6" stroke-width="0.7" fill="none" stroke-linejoin="round" stroke-linecap="round" stroke-dasharray="1.6 1"/><path d="M-4.4,2.8 H4.4" stroke="#9db9dd" stroke-width="0.6" fill="none" stroke-linejoin="round" stroke-linecap="round" stroke-dasharray="1 1"/><path d="M-1.6,1 L3.2,-3.4 M0.6,-1.4 L2.6,0.4" stroke="#4d4d4d" stroke-width="0.8" fill="none" stroke-linejoin="round" stroke-linecap="round" /></g>
<g transform="translate(764,50.2)"><path d="M-1.9,-1 L1.9,-1 L0,1 Z" fill="#333"/></g>
<line x1="770.2" y1="43" x2="770.2" y2="57" stroke="#808080" stroke-width="0.6"/>
<g transform="translate(780.5,49.8)"><path d="M-2.6,3.2 L3.4,1 M3.4,1 L0.6,-3.4" stroke="#4d4d4d" stroke-width="0.8" fill="none" stroke-linejoin="round" stroke-linecap="round" /><path d="M-0.2,-3.8 L1.4,-2.8" stroke="#3f82d6" stroke-width="0.7" fill="none" stroke-linejoin="round" stroke-linecap="round" /><path d="M-3.6,2 Q-2.4,1.2 -2.2,3.8" stroke="#9db9dd" stroke-width="0.6" fill="none" stroke-linejoin="round" stroke-linecap="round" /></g>
<g transform="translate(795,50.2)"><path d="M-1.9,-1 L1.9,-1 L0,1 Z" fill="#555"/></g>
<line x1="801.2" y1="43" x2="801.2" y2="57" stroke="#808080" stroke-width="0.6"/>
<g transform="translate(814,49.8)"><path d="M-3.8,-1.4 L0.4,-3.8 L3.6,0 L-0.8,2.6 Z" stroke="#4d4d4d" stroke-width="0.8" fill="#c9d9f0" stroke-linejoin="round" stroke-linecap="round" /><path d="M-3.8,-1.4 L-3.2,1 L-0.4,4 L-0.8,2.6 M-0.4,4 L3.8,1.4 L3.6,0" stroke="#4d4d4d" stroke-width="0.7" fill="none" stroke-linejoin="round" stroke-linecap="round" /><path d="M-1,-1 L1.6,0.6" stroke="#3f82d6" stroke-width="0.7" fill="none" stroke-linejoin="round" stroke-linecap="round" /></g>
<g transform="translate(827,50.2)"><path d="M-1.9,-1 L1.9,-1 L0,1 Z" fill="#333"/></g>
<line x1="833.6" y1="43" x2="833.6" y2="57" stroke="#808080" stroke-width="0.6"/>
<g transform="translate(843,49.8)"><path d="M-4.6,-2 L1,-2 L4.6,2.4 L-1,2.4 Z M-3,-0.8 L2,-0.8 M-1.8,0.6 L3.2,0.6" stroke="#c3c9dc" stroke-width="0.7" fill="none" stroke-linejoin="round" stroke-linecap="round" /></g>
<g transform="translate(857.4,49.8) scale(1.25)"><path d="M-1.6,-3.6 L0.8,-2.4 L1.8,3.4 L-0.6,2.4 Z" stroke="#3f82d6" stroke-width="0.8" fill="#8fb4ea" stroke-linejoin="round" stroke-linecap="round" /><path d="M-1.6,-3.6 L-2,1 L-0.6,2.4" stroke="#9db9dd" stroke-width="0.7" fill="none" stroke-linejoin="round" stroke-linecap="round" /></g>
<g transform="translate(872,49.8)"><rect x="-4" y="-3.8" width="5.4" height="5.8" stroke="#c9cede" stroke-width="0.7" fill="none" /><path d="M0,2.8 H4.4 M2,1.4 L4.4,2.8 L2,4.2" stroke="#c9cede" stroke-width="0.7" fill="none" stroke-linejoin="round" stroke-linecap="round" /><path d="M-2.6,-2.4 H0" stroke="#c9cede" stroke-width="0.6" fill="none" stroke-linejoin="round" stroke-linecap="round" /></g>
<line x1="1.4" y1="71" x2="1.4" y2="82.5" stroke="#8a8a8a" stroke-width="0.6"/>
<g transform="translate(11.5,83.8)"><path d="M-3.2,-0.2 H3.4 M-1.6,-2.4 V2.8" stroke="#4d4d4d" stroke-width="0.7" fill="none" stroke-linejoin="round" stroke-linecap="round" /><rect x="-0.6" y="-1.8" width="3.2" height="2.6" stroke="#4d4d4d" stroke-width="0.5" fill="none" /><path d="M-3,1.4 L-1.6,2.8 L-0.4,1.4" stroke="#4d4d4d" stroke-width="0.5" fill="none" stroke-linejoin="round" stroke-linecap="round" /></g>
<g transform="translate(23.8,83.8)"><path d="M-1.2,-2.2 L1.4,0 L-1.2,2.2 Z" fill="#333"/></g>
<g transform="translate(37,83.8)"><rect x="-4" y="-2.4" width="7" height="4.8" stroke="#4d4d4d" stroke-width="0.7" fill="none" stroke-dasharray="1.3 0.9"/><path d="M1.6,-2.8 L3.6,-1 L2.6,-0.8 L3,0.2" stroke="#4d4d4d" stroke-width="0.6" fill="#333" stroke-linejoin="round" stroke-linecap="round" /></g>
<g transform="translate(47,83.8)"><path d="M-1.2,-2.2 L1.4,0 L-1.2,2.2 Z" fill="#333"/></g>
<g transform="translate(63.8,84)"><circle cx="0.4" cy="0.6" r="2.6" stroke="#2d3e63" stroke-width="0.7" fill="none"/><path d="M-3,0.8 C-3.4,-2.6 0,-4 2,-2.8 M2,-2.8 L0.6,-3 M2,-2.8 L1.6,-1.6" stroke="#2d3e63" stroke-width="0.7" fill="none" stroke-linejoin="round" stroke-linecap="round" /><path d="M-0.4,2 V-0.8 L1.2,0.4" stroke="#2d3e63" stroke-width="0.6" fill="none" stroke-linejoin="round" stroke-linecap="round" /></g>
<g transform="translate(86.3,81.3)"><path d="M-2.2,-4 V2.8 L-0.6,1.4 L0.8,4.2 L2,3.6 L0.7,1 L3,0.9 Z" stroke="#444" stroke-width="0.6" fill="#8d8d8d" stroke-linejoin="round" stroke-linecap="round" /></g>
<g transform="translate(98.9,81)"><path d="M-1.2,-2.2 L1.4,0 L-1.2,2.2 Z" fill="#333"/></g>
<g transform="translate(27.3,100.7)"><rect x="-4.4" y="-3.6" width="3.6" height="3" stroke="#4d4d4d" stroke-width="0.7" fill="none" /><rect x="0.8" y="-3.6" width="3.6" height="3" stroke="#4d4d4d" stroke-width="0.7" fill="none" /><rect x="-4.4" y="0.8" width="3.6" height="3" stroke="#4d4d4d" stroke-width="0.7" fill="none" /><rect x="0.8" y="0.8" width="3.6" height="3" stroke="#4d4d4d" stroke-width="0.7" fill="none" /></g>
<g transform="translate(41.2,100.7)"><path d="M-5,3.7 V-3.8 H-1.2 V-1.2 H5.2 V3.7 Z" stroke="#4d4d4d" stroke-width="0.85" fill="#fff" stroke-linejoin="round" stroke-linecap="round" /></g>
<g transform="translate(211,100.7)"><rect x="-4" y="-4" width="8" height="8" stroke="#4d4d4d" stroke-width="0.8" fill="#fff" /><path d="M-4,-1.4 H4 M-4,1.2 H4 M-1.4,-4 V4 M1.2,-4 V4" stroke="#4d4d4d" stroke-width="0.6" fill="none" stroke-linejoin="round" stroke-linecap="round" /></g>
<g transform="translate(378.2,100.7)"><path d="M-4.2,4.8 H4.2 M-2.8,4.8 L-1.8,-0.8 H1.8 L2.8,4.8 M-2.4,-0.8 V-2.4 L0,-4.8 L2.4,-2.4 V-0.8 M-1,4.8 V2.2 H1 V4.8 M-2.2,1.4 H2.2" stroke="#4d4d4d" stroke-width="0.7" fill="none" stroke-linejoin="round" stroke-linecap="round" /><circle cx="4.6" cy="-4.2" r="1.2" stroke="#e23a2e" stroke-width="0.2" fill="#e8392c"/></g>
<g transform="translate(548,100.7)"><path d="M-4,-2.8 Q-4,-3.8 -3,-3.8 L2,-4.2 V4.2 L-3,3.8 Q-4,3.8 -4,2.8 Z" stroke="#4d4d4d" stroke-width="0.8" fill="#fff" stroke-linejoin="round" stroke-linecap="round" /><path d="M2,-4.2 L4.2,-3 V3 L2,4.2" stroke="#4d4d4d" stroke-width="0.8" fill="#fff" stroke-linejoin="round" stroke-linecap="round" /></g>
<g transform="translate(716.4,100.7)"><g transform="scale(1)"><path d="M-4.8,3.6 V-0.6 L-2.2,-3.6 H2.2 L4.8,-0.6 V3.6 Z" stroke="#4d4d4d" stroke-width="0.85" fill="#fff" stroke-linejoin="miter" stroke-linecap="round" /></g></g>
<g transform="translate(958,100.7)"><path d="M-5.6,-3.4 V3.6 M-5.6,-1.6 H-3.8 M-5.6,1 H-3.8" stroke="#3f82d6" stroke-width="0.7" fill="none" stroke-linejoin="round" stroke-linecap="round" /><rect x="-4.4" y="0" width="2" height="3.6" stroke="#3f82d6" stroke-width="0.6" fill="none" /><path d="M-1.6,3.6 V-0.4 L0.8,-3.4 H3 L5.4,-0.4 V3.6 Z" stroke="#3f82d6" stroke-width="0.8" fill="#fff" stroke-linejoin="round" stroke-linecap="round" /></g>
<g transform="translate(971.3,100.2)"><path d="M-1.9,-1 L1.9,-1 L0,1 Z" fill="#333"/></g>
<line x1="489.79999999999995" y1="111.8" x2="505.0" y2="111.8" stroke="#f3dcc0" stroke-width="1.3" stroke-dasharray="3.2 0.8"/>
<line x1="489.2" y1="575.8" x2="504.40000000000003" y2="575.8" stroke="#f0cfa8" stroke-width="1.3" stroke-dasharray="3.2 0.8"/>
<line x1="24.6" y1="335.79999999999995" x2="24.6" y2="351.0" stroke="#f2cba6" stroke-width="0.9" stroke-dasharray="2.6 1.2"/>
<line x1="970.2" y1="336.2" x2="970.2" y2="351.40000000000003" stroke="#eea868" stroke-width="0.9" stroke-dasharray="2.6 1.2"/>
<polygon points="221.3,377.6 668.5,487.7 668.5,499.2 221.3,383.9" fill="#a9adaf"/>
<polygon points="668.5,487.7 763.8,396.9 763.8,403.3 668.5,499.2" fill="#90959a"/>
<polyline points="221.3,383.9 668.5,499.2 763.8,403.3" fill="none" stroke="#8cc0b0" stroke-width="0.6"/>
<polygon points="221.3,377.6 668.5,487.7 668.5,491.4 221.3,379.6" fill="#c98c34"/>
<polygon points="668.5,487.7 763.8,396.9 763.8,398.9 668.5,491.4" fill="#b47c2b"/>
<polygon points="221.3,377.6 392.0,339.4 675.1,381.5 763.8,396.9 668.5,487.7" fill="#c5872f" stroke="#c5872f" stroke-width="0.3"/>
<polyline points="221.3,377.6 392.0,339.4 675.1,381.5 763.8,396.9" fill="none" stroke="#a9b08a" stroke-width="0.35"/>
<polyline points="221.3,378.1 668.5,488.4 763.8,397.4" fill="none" stroke="#dcae50" stroke-width="0.55"/>
<polygon points="215.1,306.9 675.3,369.3 675.3,382.3 215.1,314.4" fill="#a9adaf"/>
<polygon points="675.3,369.3 770.8,318.1 770.8,325.5 675.3,382.3" fill="#90959a"/>
<polyline points="215.1,314.4 675.3,382.3 770.8,325.5" fill="none" stroke="#8cc0b0" stroke-width="0.6"/>
<polygon points="215.1,306.9 675.3,369.3 675.3,373.5 215.1,309.3" fill="#c98c34"/>
<polygon points="675.3,369.3 770.8,318.1 770.8,320.5 675.3,373.5" fill="#b47c2b"/>
<polygon points="215.1,306.9 390.5,287.0 770.8,318.1 675.3,369.3" fill="#c5872f" stroke="#c5872f" stroke-width="0.3"/>
<polyline points="215.1,306.9 390.5,287.0 770.8,318.1" fill="none" stroke="#a9b08a" stroke-width="0.35"/>
<polyline points="215.1,307.4 675.3,370.0 770.8,318.6" fill="none" stroke="#dcae50" stroke-width="0.55"/>
<polygon points="208.8,233.9 681.6,243.6 681.6,256.2 208.8,241.7" fill="#a9adaf"/>
<polygon points="681.6,243.6 777.8,235.4 777.8,243.5 681.6,256.2" fill="#90959a"/>
<polyline points="208.8,241.7 681.6,256.2 777.8,243.5" fill="none" stroke="#8cc0b0" stroke-width="0.6"/>
<polygon points="208.8,233.9 681.6,243.6 681.6,247.6 208.8,236.4" fill="#c98c34"/>
<polygon points="681.6,243.6 777.8,235.4 777.8,238.0 681.6,247.6" fill="#b47c2b"/>
<polygon points="208.8,233.9 389.5,231.3 777.8,235.4 681.6,243.6" fill="#c5872f" stroke="#c5872f" stroke-width="0.3"/>
<polyline points="208.8,233.9 389.5,231.3 777.8,235.4" fill="none" stroke="#a9b08a" stroke-width="0.35"/>
<polyline points="208.8,234.4 681.6,244.3 777.8,235.9" fill="none" stroke="#dcae50" stroke-width="0.55"/>
<g transform="translate(9.6,106.9)"><path d="M-2.6,-4.8 V3.2 L-0.8,1.6 L0.8,4.8 L2.2,4.2 L0.7,1.2 L3.2,1 Z" stroke="#3a3a3a" stroke-width="0.7" fill="#8a8f98" stroke-linejoin="round" stroke-linecap="round" /></g>
<g transform="translate(9.3,124.4)"><rect x="-5.4" y="-4.2" width="10.8" height="8.4" stroke="#4d4d4d" stroke-width="0.8" fill="none" stroke-dasharray="1.7 1.1"/></g>
<g transform="translate(9.6,155.8) scale(1.12)"><path d="M-4.4,-2.4 L4.4,-3.8 V2.4 L-4.4,3.8 Z" stroke="#4d4d4d" stroke-width="0.62" fill="none" stroke-linejoin="round" stroke-linecap="round" /></g>
<g transform="translate(9.6,172.60000000000002) scale(1.12)"><path d="M-2.4,-4.4 L2.4,-3.6 V3.6 L-2.4,4.4 Z M0.8,0 V1.4" stroke="#4d4d4d" stroke-width="0.62" fill="none" stroke-linejoin="round" stroke-linecap="round" /></g>
<g transform="translate(9.6,189.4) scale(1.12)"><rect x="-4.2" y="-3.6" width="8.4" height="7.2" stroke="#4d4d4d" stroke-width="0.62" fill="none" /><path d="M-4.2,0 H4.2 M0,-3.6 V3.6" stroke="#4d4d4d" stroke-width="0.58" fill="none" stroke-linejoin="round" stroke-linecap="round" /></g>
<g transform="translate(9.6,206.20000000000002) scale(1.12)"><path d="M-4.2,-3 H2.4 V3 H-4.2 Z M2.4,-3 L4.4,-4 V2 L2.4,3 M-4.2,3 L-2.6,4.2 H1 L2.4,3" stroke="#4d4d4d" stroke-width="0.62" fill="none" stroke-linejoin="round" stroke-linecap="round" /></g>
<g transform="translate(9.6,223.0) scale(1.12)"><path d="M-1.6,-4 Q0,-5 1.6,-4 V4 Q0,5 -1.6,4 Z" stroke="#4d4d4d" stroke-width="0.62" fill="none" stroke-linejoin="round" stroke-linecap="round" /></g>
<g transform="translate(9.6,239.8) scale(1.12)"><path d="M-4.6,-2.6 L4.6,0.8 V3 L-4.6,-0.4 Z" stroke="#4d4d4d" stroke-width="0.62" fill="none" stroke-linejoin="round" stroke-linecap="round" /></g>
<g transform="translate(9.6,256.6) scale(1.12)"><path d="M-4.8,0.4 L0.6,-2.8 L4.8,-0.6 L-0.6,2.8 Z M-4.8,0.4 V1.4 L-0.6,3.8 L4.8,0.4 V-0.6" stroke="#4d4d4d" stroke-width="0.62" fill="none" stroke-linejoin="round" stroke-linecap="round" /></g>
<g transform="translate(9.6,273.40000000000003) scale(1.12)"><path d="M-4,-2.6 L-0.6,-3.6 L1,-2.4 L-2.4,-1.2 Z M-2.4,-1.2 V0 L1,-1.2 L3,0 L-0.6,1.4 Z M-0.6,1.4 V2.6 L3,1.2 L4.8,2.4 L1,3.8 L-0.6,2.6 M1,-2.4 V-1.2 M3,0 V1.2" stroke="#4d4d4d" stroke-width="0.6" fill="none" stroke-linejoin="round" stroke-linecap="round" /></g>
<g transform="translate(9.6,290.20000000000005) scale(1.12)"><path d="M-4.8,0 L4.8,-3.2 M-4.8,2 L4.8,-1.2 M-4.8,-0.4 V4.2 M-0.6,-1.6 V2.4 M4.4,-3.4 V1.2" stroke="#4d4d4d" stroke-width="0.58" fill="none" stroke-linejoin="round" stroke-linecap="round" /></g>
<g transform="translate(9.6,307.0) scale(1.12)"><path d="M-5.2,0.8 L-2,-3.4 H1.8 L5,1 L2.4,0.2 L-1.2,4.2 Z M1.8,-3.4 L2.4,0.2" stroke="#4d4d4d" stroke-width="0.62" fill="none" stroke-linejoin="round" stroke-linecap="round" /></g>
<g transform="translate(9.6,323.8) scale(1.12)"><path d="M-4.6,-3 L0.4,0.4 L4.6,-3.8 L1.6,4 L-0.4,1.2 L-4.6,3.2 Z" stroke="#4d4d4d" stroke-width="0.62" fill="none" stroke-linejoin="round" stroke-linecap="round" /></g>
<g transform="translate(9.6,340.6) scale(1.12)"><path d="M-4.6,-1 L1,-3.6 L4.6,-1.2 L-0.8,1.6 Z M-4.2,1.2 L-0.8,3.4 L4.4,0.8 M-3.8,-0.4 L-0.8,1.6" stroke="#4d4d4d" stroke-width="0.58" fill="none" stroke-linejoin="round" stroke-linecap="round" /></g>
<g transform="translate(9.6,357.40000000000003) scale(1.12)"><rect x="-4.4" y="-4" width="8.8" height="8" stroke="#4d4d4d" stroke-width="0.62" fill="none" /><path d="M-4.4,-1.4 H4.4 M-4.4,1.2 H4.4 M-1.6,-4 V4 M1.4,-4 V4" stroke="#4d4d4d" stroke-width="0.6" fill="none" stroke-linejoin="round" stroke-linecap="round" /></g>
<g transform="translate(9.6,374.20000000000005) scale(1.12)"><path d="M-2.6,-2.6 L0.4,-4.4 L3,-1.4 V2.6 L0,4.4 L-2.6,2 Z M0.4,-4.4 V0.6 L3,2.6 M0.4,0.6 L-2.6,2" stroke="#4d4d4d" stroke-width="0.58" fill="none" stroke-linejoin="round" stroke-linecap="round" /></g>
<g transform="translate(9.6,391.0) scale(1.12)"><path d="M-2.6,4.4 V-2.6 Q-2.6,-4.4 -1,-4.4 Q0.6,-4.4 0.6,-2.6 V0 H2.8 V4.4 M-2.6,0 H0.6 M-2.6,2 H2.8" stroke="#4d4d4d" stroke-width="0.62" fill="none" stroke-linejoin="round" stroke-linecap="round" /></g>
<g transform="translate(9.6,407.8) scale(1.12)"><path d="M-4.4,-4 H1 V-0.6 H4.4 V4 H-4.4 Z" stroke="#4d4d4d" stroke-width="0.62" fill="none" stroke-linejoin="round" stroke-linecap="round" /><circle cx="-1.4" cy="0.6" r="1.4" stroke="#4d4d4d" stroke-width="0.58" fill="none"/></g>
<g transform="translate(9.6,424.6) scale(1.12)"><path d="M-4.8,-1 L0.6,-3.6 L4.8,0.6 L-0.4,3.6 Z M-3,-0.2 Q0,0.6 2.8,-1.6 M-1.6,1.4 Q1,1.4 3.8,-0.4 M-2,-2.4 Q-1,0.6 1.6,2.4" stroke="#4d4d4d" stroke-width="0.6" fill="none" stroke-linejoin="round" stroke-linecap="round" /></g>
<g transform="translate(9.8,493.3)"><path d="M-4.4,0.6 H4.4 M-4.4,-1 V2.2 M4.4,-1 V2.2" stroke="#a8a8a8" stroke-width="0.7" fill="none" stroke-linejoin="round" stroke-linecap="round" /><text x="0" y="-1.4" font-size="3.4" text-anchor="middle" fill="#a8a8a8" font-family="Liberation Sans,sans-serif">1.2</text></g>
<g transform="translate(9.8,510)"><circle cx="-0.6" cy="0.6" r="3" stroke="#a8a8a8" stroke-width="0.7" fill="none"/><path d="M-0.6,-3.8 V5 M-5,0.6 H3.8" stroke="#a8a8a8" stroke-width="0.6" fill="none" stroke-linejoin="round" stroke-linecap="round" /><text x="3.4" y="-2.2" font-size="3.4" text-anchor="middle" fill="#a8a8a8" font-family="Liberation Sans,sans-serif">1.2</text></g>
<g transform="translate(4.6,546.6)"><path d="M-2.6,2.6 L2,-2 M-2.6,2.6 V0 M-2.6,2.6 H0" stroke="#a8a8a8" stroke-width="0.8" fill="none" stroke-linejoin="round" stroke-linecap="round" /></g>
<g transform="translate(8.8,560.6)"><path d="M-6,3.6 L-1.6,-3.4 H5.2 L2.4,0.2 L5.6,3.6 Z" stroke="#a8a8a8" stroke-width="0.7" fill="#bdbdbd" stroke-linejoin="round" stroke-linecap="round" /><path d="M-3,3.4 L2,-3 M-0.4,3.4 L4.4,-2.2 M2.2,3.4 L4.6,0.8" stroke="#8d8d8d" stroke-width="0.6" fill="none" stroke-linejoin="round" stroke-linecap="round" /></g>
<g transform="translate(9.8,576.5)"><path d="M-4,3 L4,-3" stroke="#a8a8a8" stroke-width="0.8" fill="none" stroke-linejoin="round" stroke-linecap="round" /></g>
<g transform="translate(26.4,586.5)"><path d="M-2.2,1.4 A3.2,3.2 0 1 1 0.2,3" stroke="#4d4d4d" stroke-width="0.75" fill="none" stroke-linejoin="round" stroke-linecap="round" /><path d="M-4.6,-2.6 L-2.4,1.6 L0.6,0.2" stroke="#4d4d4d" stroke-width="0.75" fill="none" stroke-linejoin="round" stroke-linecap="round" /><path d="M2.6,2.4 L4.6,4.4" stroke="#4d4d4d" stroke-width="0.9" fill="none" stroke-linejoin="round" stroke-linecap="round" /></g>
<g transform="translate(38.8,586.5)"><circle cx="-0.4" cy="-0.6" r="3" stroke="#bdbdbd" stroke-width="0.7" fill="none"/><path d="M1.8,1.6 L4,3.8" stroke="#bdbdbd" stroke-width="0.8" fill="none" stroke-linejoin="round" stroke-linecap="round" /></g>
<g transform="translate(51.8,586.5)"><circle cx="-0.4" cy="-0.6" r="3.1" stroke="#4d4d4d" stroke-width="0.75" fill="none"/><path d="M2,1.8 L4.2,4" stroke="#4d4d4d" stroke-width="0.9" fill="none" stroke-linejoin="round" stroke-linecap="round" /><path d="M-2,-0.6 H1.2 M-0.4,-2.2 V1" stroke="#4d4d4d" stroke-width="0.6" fill="none" stroke-linejoin="round" stroke-linecap="round" /></g>
<line x1="59.5" y1="581.4" x2="59.5" y2="591.8" stroke="#c2c2c2" stroke-width="0.6"/>
<g transform="translate(67.5,586.5)"><path d="M-3.8,0.2 C-3.8,-3.4 3.8,-3.4 3.8,0.2 C3.8,2 1,2.4 0,0.8 C-0.8,-0.6 -2.8,0.4 -2.2,2" stroke="#4d4d4d" stroke-width="0.7" fill="none" stroke-linejoin="round" stroke-linecap="round" /><path d="M-3.2,1.2 L-2.2,2.2 L-1.2,1" stroke="#4d4d4d" stroke-width="0.6" fill="none" stroke-linejoin="round" stroke-linecap="round" /></g>
<g transform="translate(80.5,586.5)"><circle cx="-0.2" cy="-2.8" r="0.8" stroke="#4d4d4d" stroke-width="0.6" fill="none"/><path d="M-0.2,-1.8 L-0.4,0.6 L-1.8,3.4 M-0.4,0.6 L1.4,3.4 M-1.8,-0.4 L-0.2,-1.4 L1.6,-0.2" stroke="#4d4d4d" stroke-width="0.7" fill="none" stroke-linejoin="round" stroke-linecap="round" /></g>
<line x1="88" y1="581.4" x2="88" y2="591.8" stroke="#c2c2c2" stroke-width="0.6"/>
<g transform="translate(96.3,586.5)"><circle cx="-0.4" cy="-0.4" r="2.9" stroke="#4d4d4d" stroke-width="0.7" fill="none"/><path d="M1.8,1.8 L3.8,3.8" stroke="#4d4d4d" stroke-width="0.9" fill="none" stroke-linejoin="round" stroke-linecap="round" /><path d="M-1.6,-1.6 L0.8,0.8 M0.8,-1.6 L-1.6,0.8" stroke="#4d4d4d" stroke-width="0.5" fill="none" stroke-linejoin="round" stroke-linecap="round" /></g>
<g transform="translate(171.5,586.5)"><path d="M-1.2,-2.2 L1.4,0 L-1.2,2.2 Z" fill="#999"/></g>
<line x1="177.2" y1="581.4" x2="177.2" y2="591.8" stroke="#c2c2c2" stroke-width="0.6"/>
<g transform="translate(184.5,586.5)"><path d="M-3,0 C-3,-3 3,-3 3,0 M-3,0 L-1.6,1.6 H1.6 L3,0 M0.6,-0.6 L2.6,1.8" stroke="#bdbdbd" stroke-width="0.7" fill="none" stroke-linejoin="round" stroke-linecap="round" /></g>
<g transform="translate(260,586.5)"><path d="M-1.2,-2.2 L1.4,0 L-1.2,2.2 Z" fill="#999"/></g>
<line x1="266.5" y1="581.4" x2="266.5" y2="591.8" stroke="#c2c2c2" stroke-width="0.6"/>
<g transform="translate(274,586.5)"><rect x="-3.6" y="-1.6" width="7.2" height="3.4" stroke="#4d4d4d" stroke-width="0.7" fill="none" /><path d="M-1.8,-1.6 V0 M0,-1.6 V0.4 M1.8,-1.6 V0" stroke="#4d4d4d" stroke-width="0.5" fill="none" stroke-linejoin="round" stroke-linecap="round" /></g>
<g transform="translate(349.5,586.5)"><path d="M-1.2,-2.2 L1.4,0 L-1.2,2.2 Z" fill="#333"/></g>
<line x1="355" y1="581.4" x2="355" y2="591.8" stroke="#c2c2c2" stroke-width="0.6"/>
<g transform="translate(363,586.5)"><path d="M-3.8,2.6 L-2,0.6 H3.8 L2,2.6 Z M-3.8,0.6 L-2,-1.4 H3.8 L2,0.6 Z M-2.6,-1.2 L-1,-3 H3.8 L2.6,-1.4" stroke="#4d4d4d" stroke-width="0.6" fill="none" stroke-linejoin="round" stroke-linecap="round" /></g>
<g transform="translate(438.2,586.5)"><path d="M-1.2,-2.2 L1.4,0 L-1.2,2.2 Z" fill="#333"/></g>
<line x1="444.3" y1="581.4" x2="444.3" y2="591.8" stroke="#c2c2c2" stroke-width="0.6"/>
<g transform="translate(452,586.6)"><rect x="-3.8" y="-3" width="7.6" height="6" stroke="#555" stroke-width="0.6" fill="#666" /><path d="M-2.6,-1.4 H2.6" stroke="#eee" stroke-width="0.7" fill="none" stroke-linejoin="round" stroke-linecap="round" /><path d="M-2.4,0.8 H-0.6 M0.6,0.8 H2.4" stroke="#ddd" stroke-width="0.9" fill="none" stroke-linejoin="round" stroke-linecap="round" /></g>
<g transform="translate(526.8,586.5)"><path d="M-1.2,-2.2 L1.4,0 L-1.2,2.2 Z" fill="#333"/></g>
<line x1="533.3" y1="581.4" x2="533.3" y2="591.8" stroke="#c2c2c2" stroke-width="0.6"/>
<g transform="translate(540.8,586.5)"><path d="M-1.6,-3.2 V1.4 Q-1.6,3.4 0,3.4 Q1.6,3.4 1.6,1.4 V-3.2" stroke="#4d4d4d" stroke-width="0.7" fill="none" stroke-linejoin="round" stroke-linecap="round" /></g>
<g transform="translate(616.3,586.5)"><path d="M-1.2,-2.2 L1.4,0 L-1.2,2.2 Z" fill="#333"/></g>
<line x1="621.8" y1="581.4" x2="621.8" y2="591.8" stroke="#c2c2c2" stroke-width="0.6"/>
<g transform="translate(629.5,586.5)"><rect x="-3.8" y="-2.8" width="7.6" height="5.6" stroke="#4d4d4d" stroke-width="0.7" fill="none" /><rect x="-2" y="-1.2" width="4" height="2.6" stroke="#4d4d4d" stroke-width="0.5" fill="none" /></g>
<g transform="translate(704.5,586.5)"><path d="M-1.2,-2.2 L1.4,0 L-1.2,2.2 Z" fill="#333"/></g>
<line x1="710.5" y1="581.4" x2="710.5" y2="591.8" stroke="#c2c2c2" stroke-width="0.6"/>
<g transform="translate(718.3,586.5)"><rect x="-3.4" y="-2.6" width="4" height="4.4" stroke="#4d4d4d" stroke-width="0.6" fill="none" /><rect x="0" y="-0.2" width="3.2" height="3.4" stroke="#4d4d4d" stroke-width="0.6" fill="#cfe0f7" /><path d="M-3.4,3.2 H-0.6" stroke="#4d4d4d" stroke-width="0.5" fill="none" stroke-linejoin="round" stroke-linecap="round" /></g>
<g transform="translate(793.8,586.5)"><path d="M-1.2,-2.2 L1.4,0 L-1.2,2.2 Z" fill="#333"/></g>
<line x1="799.5" y1="581.4" x2="799.5" y2="591.8" stroke="#c2c2c2" stroke-width="0.6"/>
<g transform="translate(808,586.5)"><path d="M-2.6,3.2 V-1.2 L-0.6,-3.4 L1.2,-1.2 V3.2 Z" stroke="#4d4d4d" stroke-width="0.6" fill="none" stroke-linejoin="round" stroke-linecap="round" /><path d="M1,3.2 L2.6,0.6 L4,3.2 Z" stroke="#3f82d6" stroke-width="0.6" fill="#9dbfee" stroke-linejoin="round" stroke-linecap="round" /></g>
<g transform="translate(882,586.5)"><path d="M-1.2,-2.2 L1.4,0 L-1.2,2.2 Z" fill="#333"/></g>
<line x1="887.5" y1="581.4" x2="887.5" y2="591.8" stroke="#c2c2c2" stroke-width="0.6"/>
<g transform="translate(895,586.5)"><path d="M-3.4,0 L-1.4,-2.6 H3.4 L1.4,0 Z M-3.4,0 V2.8 H1.4 V0 M1.4,2.8 L3.4,0.2 V-2.6" stroke="#4d4d4d" stroke-width="0.6" fill="none" stroke-linejoin="round" stroke-linecap="round" /></g>
<g transform="translate(970,586.5)"><path d="M-1.2,-2.2 L1.4,0 L-1.2,2.2 Z" fill="#333"/></g>
<g transform="translate(985,108.5)"><rect x="-3.6" y="-3.6" width="7.2" height="7.2" stroke="#b9b9b9" stroke-width="0.7" fill="#d9d9d9" /></g>
<g transform="translate(1000.5,108.8)"><path d="M-3.6,2.8 H3.6 M-2.4,1.2 H2.4 M0,-3.4 V0 M-1.4,-1.2 L0,0.4 L1.4,-1.2" stroke="#a2a2a2" stroke-width="0.7" fill="none" stroke-linejoin="round" stroke-linecap="round" /></g>
<g transform="translate(1073.2,108.6)"><path d="M-1.2,-2.2 L1.4,0 L-1.2,2.2 Z" fill="#999"/></g>
<g transform="translate(985,126)"><rect x="-4" y="-4" width="5" height="5" stroke="#bbbfca" stroke-width="0.7" fill="none" /><rect x="-0.6" y="-0.6" width="5" height="5" stroke="#bbbfca" stroke-width="0.7" fill="none" /><path d="M-2.4,-2.4 L1.8,1.8 M1.8,0 V1.8 H0" stroke="#bbbfca" stroke-width="0.6" fill="none" stroke-linejoin="round" stroke-linecap="round" /></g>
<g transform="translate(1019,126)"><rect x="-4.2" y="-3.6" width="6.6" height="5.6" stroke="#bbbfca" stroke-width="0.7" fill="none" /><path d="M2.4,-0.6 V4.4 M0,2 H4.8" stroke="#bbbfca" stroke-width="0.8" fill="none" stroke-linejoin="round" stroke-linecap="round" /></g>
<g transform="translate(1035.6,126)"><path d="M-3.6,-1.6 L0,-4 L3.6,-1.6 L2.6,2.6 H-2.6 Z" stroke="#bbbfca" stroke-width="0.7" fill="none" stroke-linejoin="round" stroke-linecap="round" /><path d="M2.8,-3.6 L4.2,-2 M-4.2,2 L-2.8,3.6" stroke="#bbbfca" stroke-width="0.6" fill="none" stroke-linejoin="round" stroke-linecap="round" /></g>
<g transform="translate(1052.5,126)"><rect x="-4.2" y="-3.6" width="5" height="5" stroke="#bbbfca" stroke-width="0.7" fill="none" /><rect x="-0.6" y="-0.8" width="5" height="5" stroke="#a7c3e6" stroke-width="0.7" fill="none" /><path d="M1,0.8 L3,3 M3,0.8 L1,3" stroke="#a7c3e6" stroke-width="0.5" fill="none" stroke-linejoin="round" stroke-linecap="round" /></g>
<g transform="translate(1069.5,126)"><circle cx="0" cy="0" r="4" stroke="#bbbfca" stroke-width="0.7" fill="none"/><path d="M-2,-0.6 Q0,-3 2,-0.8 M2,-0.8 V-2.2 M2,0.8 Q0,3 -2,0.8 M-2,0.8 V2.2" stroke="#bbbfca" stroke-width="0.6" fill="none" stroke-linejoin="round" stroke-linecap="round" /></g>
<g transform="translate(1000.8,157.4)"><circle cx="0" cy="0" r="2" stroke="#d6d6b8" stroke-width="0.3" fill="#d8d8b4"/></g>
<g transform="translate(1006.3,157)"><path d="M-1.2,-2.2 L1.4,0 L-1.2,2.2 Z" fill="#8a8a8a"/></g>
<line x1="1015" y1="156" x2="1056" y2="156" stroke="#dcdcdc" stroke-width="1.6"/>
<line x1="1016.4" y1="161.6" x2="1056" y2="161.6" stroke="#c2c2c2" stroke-width="1.6" stroke-dasharray="0.6 3.62"/>
<path d="M1052.4,152.8 H1056.2 V157.6 L1054.3,159.4 L1052.4,157.6 Z" fill="#b9b9b9"/>
<g transform="translate(1074,157)"><path d="M-1.2,-2.2 L1.4,0 L-1.2,2.2 Z" fill="#8a8a8a"/></g>
<g transform="translate(999.4,185.2) scale(1.25)"><path d="M0,0 L0,-2.6 A2.6,2.6 0 0 1 2.3,1.3 Z" fill="#6aa7d8"/><path d="M0,0 L2.3,1.3 A2.6,2.6 0 0 1 -2.3,1.3 Z" fill="#8cc37a"/><path d="M0,0 L-2.3,1.3 A2.6,2.6 0 0 1 0,-2.6 Z" fill="#e0655a"/></g>
<g transform="translate(1006.3,185.4)"><path d="M-1.2,-2.2 L1.4,0 L-1.2,2.2 Z" fill="#8a8a8a"/></g>
<line x1="1015" y1="183.6" x2="1056" y2="183.6" stroke="#dcdcdc" stroke-width="1.6"/>
<line x1="1016.4" y1="189.2" x2="1056" y2="189.2" stroke="#c2c2c2" stroke-width="1.6" stroke-dasharray="0.6 3.62"/>
<path d="M1052.4,180.4 H1056.2 V185.2 L1054.3,187.0 L1052.4,185.2 Z" fill="#b9b9b9"/>
<g transform="translate(1001.5,205.6)"><rect x="-4" y="-4" width="5.4" height="5.4" stroke="#bbbfca" stroke-width="0.7" fill="none" /><path d="M0,4.2 V0.6 Q0.6,-0.4 1.2,0.6 V1.8 Q2,1 2.6,2 Q3.4,1.6 3.6,2.6 V4.2" stroke="#bbbfca" stroke-width="0.6" fill="none" stroke-linejoin="round" stroke-linecap="round" /></g>
<g transform="translate(1019,205.6)"><rect x="-4" y="-4" width="5.4" height="5.4" stroke="#a9bfe0" stroke-width="0.7" fill="none" /><rect x="-1" y="-1" width="5.4" height="5.4" stroke="#bbbfca" stroke-width="0.7" fill="none" /><path d="M0.4,2.6 L3,0.4" stroke="#bbbfca" stroke-width="0.5" fill="none" stroke-linejoin="round" stroke-linecap="round" /></g>
<g transform="translate(1036,205.6)"><rect x="-4.2" y="-3" width="8.4" height="6.4" stroke="#bbbfca" stroke-width="0.7" fill="none" /><rect x="-1.6" y="-1" width="3.4" height="3" stroke="#bbbfca" stroke-width="0.6" fill="none" /><path d="M-1,-3 V-4.2 H1 V-3" stroke="#bbbfca" stroke-width="0.6" fill="none" stroke-linejoin="round" stroke-linecap="round" /></g>
<g transform="translate(1052.5,205.6)"><rect x="-4" y="-4" width="5.6" height="5.2" stroke="#bbbfca" stroke-width="0.7" fill="none" /><path d="M-1,3 Q1.6,0.8 4.2,3 Q1.6,5 -1,3 Z" stroke="#bbbfca" stroke-width="0.7" fill="none" stroke-linejoin="round" stroke-linecap="round" /></g>
<g transform="translate(985.8,230.6)"><rect x="-3.8" y="-4" width="3.4" height="3" stroke="#4d4d4d" stroke-width="0.8" fill="none" /><path d="M-2,-1 V3.4 H0.4 M-2,1 H0.4" stroke="#4d4d4d" stroke-width="0.8" fill="none" stroke-linejoin="round" stroke-linecap="round" /><path d="M1,1 H3.8 M1,3.4 H3.8" stroke="#4d4d4d" stroke-width="1.0" fill="none" stroke-linejoin="round" stroke-linecap="round" /></g>
<g transform="translate(996.9,230.4)"><path d="M-1.2,-2.2 L1.4,0 L-1.2,2.2 Z" fill="#333"/></g>
<g transform="translate(1019.8,230.4) scale(1.2)"><path d="M-4.2,4 V-0.6 L-1.4,-4 L1.4,-0.6 M-4.2,4 H4.4 V-0.6 H1.4 V4" stroke="#3c4a63" stroke-width="0.8" fill="none" stroke-linejoin="miter" stroke-linecap="round" /></g>
<g transform="translate(1036.8,230.6)"><path d="M-5,3.8 V-3.8 H-1.4 V-1.4 H5 V3.8 Z" stroke="#4d4d4d" stroke-width="0.9" fill="none" stroke-linejoin="miter" stroke-linecap="round" /></g>
<g transform="translate(1053.8,230.6)"><path d="M-3.2,-4 H5 V2.6 H2.2 M-3.2,-4 Q-5,-1 -5,4.2 H2.2 V-1.4 M-3.2,-4 V-1.4 H2.2 V-1.4 M2.2,2.6 V4.2" stroke="#4d4d4d" stroke-width="0.85" fill="none" stroke-linejoin="round" stroke-linecap="round" /></g>
<g transform="translate(1070.6,230.6)"><path d="M-2.4,-2.4 H4.4 V4.2 H-2.4 Z" stroke="#4d4d4d" stroke-width="0.8" fill="#666" stroke-linejoin="round" stroke-linecap="round" /><path d="M-4,-3.8 H2.8 V2.8 H-4 Z" stroke="#4d4d4d" stroke-width="0.85" fill="#f0f0f0" stroke-linejoin="round" stroke-linecap="round" /><path d="M-2.6,-2.2 H1.4" stroke="#4d4d4d" stroke-width="0.6" fill="none" stroke-linejoin="round" stroke-linecap="round" /></g>
<path d="M1071.8,246.4 L1074.2,243.9 L1076.6,246.4" stroke="#444" stroke-width="1.0" fill="none" stroke-linejoin="round" stroke-linecap="round" />
<path d="M1071.8,512 L1074.2,514.5 L1076.6,512" stroke="#444" stroke-width="1.0" fill="none" stroke-linejoin="round" stroke-linecap="round" />
<g transform="translate(1003.5,246.1)"><path d="M-5,3.7 V-3.8 H-1.2 V-1.2 H5.2 V3.7 Z" stroke="#4d4d4d" stroke-width="0.85" fill="#fff" stroke-linejoin="round" stroke-linecap="round" /></g>
<g transform="translate(1003.5,258.5)"><path d="M-5,3.7 V-3.8 H-1.2 V-1.2 H5.2 V3.7 Z" stroke="#4d4d4d" stroke-width="0.85" fill="#fff" stroke-linejoin="round" stroke-linecap="round" /></g>
<g transform="translate(1003.5,270.9)"><path d="M-5,3.7 V-3.8 H-1.2 V-1.2 H5.2 V3.7 Z" stroke="#4d4d4d" stroke-width="0.85" fill="#fff" stroke-linejoin="round" stroke-linecap="round" /></g>
<g transform="translate(998.1,283.3)"><path d="M-5,3.6 V-0.4 L-2.2,-3.4 H2.2 L5,-0.4 V3.6 Z" stroke="#4d4d4d" stroke-width="0.85" fill="#fff" stroke-linejoin="miter" stroke-linecap="round" /><path d="M-5,-0.2 H5" stroke="#4d4d4d" stroke-width="0.7" fill="none" stroke-linejoin="round" stroke-linecap="round" /></g>
<g transform="translate(987.6,295.7)"><path d="M-2.2,-1.1 L0,1.2 L2.2,-1.1" stroke="#333" stroke-width="1.0" fill="none" stroke-linejoin="round" stroke-linecap="round" /></g>
<g transform="translate(998.1,295.7)"><g transform="scale(1.04)"><path d="M-4.8,3.6 V-0.6 L-2.2,-3.6 H2.2 L4.8,-0.6 V3.6 Z" stroke="#4d4d4d" stroke-width="0.85" fill="#dcdcdc" stroke-linejoin="miter" stroke-linecap="round" /></g></g>
<g transform="translate(1003.6,308.1)"><g transform="scale(0.92)"><path d="M-4.8,3.6 V-0.6 L-2.2,-3.6 H2.2 L4.8,-0.6 V3.6 Z" stroke="#4d4d4d" stroke-width="0.85" fill="#fff" stroke-linejoin="miter" stroke-linecap="round" /></g></g>
<g transform="translate(1003.6,320.5)"><g transform="scale(0.92)"><path d="M-4.8,3.6 V-0.6 L-2.2,-3.6 H2.2 L4.8,-0.6 V3.6 Z" stroke="#4d4d4d" stroke-width="0.85" fill="#fff" stroke-linejoin="miter" stroke-linecap="round" /></g></g>
<g transform="translate(1003.6,332.9)"><g transform="scale(0.92)"><path d="M-4.8,3.6 V-0.6 L-2.2,-3.6 H2.2 L4.8,-0.6 V3.6 Z" stroke="#4d4d4d" stroke-width="0.85" fill="#fff" stroke-linejoin="miter" stroke-linecap="round" /></g></g>
<g transform="translate(1003.6,345.3)"><g transform="scale(0.92)"><path d="M-4.8,3.6 V-0.6 L-2.2,-3.6 H2.2 L4.8,-0.6 V3.6 Z" stroke="#4d4d4d" stroke-width="0.85" fill="#fff" stroke-linejoin="miter" stroke-linecap="round" /></g></g>
<g transform="translate(998.1,357.7) scale(1.14)"><rect x="-4.2" y="-3.4" width="8.4" height="6.8" stroke="#4d4d4d" stroke-width="0.8" fill="#e4e4e4" /><path d="M-4.2,-1.6 H4.2 M-1.6,-1.6 V3.4 M1,-1.6 V0.8 H4.2" stroke="#4d4d4d" stroke-width="0.6" fill="none" stroke-linejoin="round" stroke-linecap="round" /></g>
<g transform="translate(998.1,370.1) scale(1.14)"><path d="M-4.2,3.4 V-3.4 H2.4 L4.2,-1.6 V3.4 Z" stroke="#4d4d4d" stroke-width="0.8" fill="#fff" stroke-linejoin="round" stroke-linecap="round" /><path d="M-2.8,2.2 L-2.2,0.4 L0.8,-2 L2,-0.8 L-1,1.8 Z M-2.8,2.2 H2.6" stroke="#4d4d4d" stroke-width="0.6" fill="#888" stroke-linejoin="round" stroke-linecap="round" /></g>
<g transform="translate(998.1,382.5) scale(1.14)"><circle cx="0" cy="0" r="4.1" stroke="#4d4d4d" stroke-width="0.8" fill="#fff"/><path d="M-1.2,-3.9 V3.9 M-1.2,-0.8 H3.9 M1.4,-0.8 V2 H-1.2" stroke="#4d4d4d" stroke-width="0.7" fill="none" stroke-linejoin="round" stroke-linecap="round" /></g>
<g transform="translate(998.1,394.9) scale(1.14)"><path d="M-4.2,3.4 V-3.4 H2.4 L4.2,-1.6 V3.4 Z" stroke="#4d4d4d" stroke-width="0.8" fill="#fff" stroke-linejoin="round" stroke-linecap="round" /><path d="M-2.6,-0.6 H1.2 V2.2 H-2.6 Z M-2.6,-0.6 L-1.6,-1.6 H2.2 V1.2 L1.2,2.2 M1.2,-0.6 L2.2,-1.6" stroke="#4d4d4d" stroke-width="0.6" fill="#eee" stroke-linejoin="round" stroke-linecap="round" /></g>
<g transform="translate(987.6,407.3)"><path d="M-2.2,-1.1 L0,1.2 L2.2,-1.1" stroke="#333" stroke-width="1.0" fill="none" stroke-linejoin="round" stroke-linecap="round" /></g>
<g transform="translate(998.1,407.3) scale(1.2)"><path d="M-3.6,-2.4 Q-3.6,-3.4 -2.6,-3.4 L1.8,-3.8 V3.8 L-2.6,3.4 Q-3.6,3.4 -3.6,2.4 Z" stroke="#4d4d4d" stroke-width="0.8" fill="#fff" stroke-linejoin="round" stroke-linecap="round" /><path d="M1.8,-3.8 L3.8,-2.8 V2.8 L1.8,3.8" stroke="#4d4d4d" stroke-width="0.8" fill="#fff" stroke-linejoin="round" stroke-linecap="round" /></g>
<g transform="translate(1003.5,419.7) scale(1.12)"><path d="M-3.6,-2.4 Q-3.6,-3.4 -2.6,-3.4 L1.8,-3.8 V3.8 L-2.6,3.4 Q-3.6,3.4 -3.6,2.4 Z" stroke="#4d4d4d" stroke-width="0.8" fill="#fff" stroke-linejoin="round" stroke-linecap="round" /><path d="M1.8,-3.8 L3.8,-2.8 V2.8 L1.8,3.8" stroke="#4d4d4d" stroke-width="0.8" fill="#fff" stroke-linejoin="round" stroke-linecap="round" /></g>
<g transform="translate(1003.5,432.1) scale(1.15)"><path d="M-3.6,-1.6 L-1.8,-3.6 H3.4 L3.4,1.6 L1.6,3.6 H-3.6 Z M-3.6,-1.6 H1.6 V3.6 M1.6,-1.6 L3.4,-3.6" stroke="#4d4d4d" stroke-width="0.75" fill="#fff" stroke-linejoin="round" stroke-linecap="round" /></g>
<g transform="translate(987.6,444.5)"><path d="M-2.2,-1.1 L0,1.2 L2.2,-1.1" stroke="#333" stroke-width="1.0" fill="none" stroke-linejoin="round" stroke-linecap="round" /></g>
<g transform="translate(998.4,444.5) scale(1.06)"><rect x="-3.5" y="-4.6" width="7" height="9.2" stroke="#3a3a3a" stroke-width="0.85" fill="#fff" /><path d="M-3.5,-2.3 H3.5 M-3.5,0 H3.5 M-3.5,2.3 H3.5 M-1.2,-4.6 V4.6 M1.2,-4.6 V4.6" stroke="#3a3a3a" stroke-width="0.7" fill="none" stroke-linejoin="round" stroke-linecap="round" /></g>
<g transform="translate(993.3,456.9)"><path d="M-2.2,-1.1 L0,1.2 L2.2,-1.1" stroke="#333" stroke-width="1.0" fill="none" stroke-linejoin="round" stroke-linecap="round" /></g>
<g transform="translate(1003.5,457.2)"><rect x="-5.2" y="-1.5" width="10.4" height="3" stroke="#4d4d4d" stroke-width="0.6" fill="#8a8a8a" /><path d="M-3.4,-1.5 V1.5 M-1.7,-1.5 V1.5 M0,-1.5 V1.5 M1.7,-1.5 V1.5 M3.4,-1.5 V1.5" stroke="#e4e4e4" stroke-width="0.5" fill="none" stroke-linejoin="round" stroke-linecap="round" /></g>
<g transform="translate(1009.5,469.3)"><rect x="-3.5" y="-4.6" width="7" height="9.2" stroke="#3a3a3a" stroke-width="0.85" fill="#fff" /><path d="M-3.5,-2.3 H3.5 M-3.5,0 H3.5 M-3.5,2.3 H3.5 M-1.2,-4.6 V4.6 M1.2,-4.6 V4.6" stroke="#3a3a3a" stroke-width="0.7" fill="none" stroke-linejoin="round" stroke-linecap="round" /></g>
<g transform="translate(1009.5,481.7)"><rect x="-3.5" y="-4.6" width="7" height="9.2" stroke="#3a3a3a" stroke-width="0.85" fill="#fff" /><path d="M-3.5,-2.3 H3.5 M-3.5,0 H3.5 M-3.5,2.3 H3.5 M-1.2,-4.6 V4.6 M1.2,-4.6 V4.6" stroke="#3a3a3a" stroke-width="0.7" fill="none" stroke-linejoin="round" stroke-linecap="round" /></g>
<g transform="translate(1009.5,494.1)"><rect x="-3.5" y="-4.6" width="7" height="9.2" stroke="#3a3a3a" stroke-width="0.85" fill="#fff" /><path d="M-3.5,-2.3 H3.5 M-3.5,0 H3.5 M-3.5,2.3 H3.5 M-1.2,-4.6 V4.6 M1.2,-4.6 V4.6" stroke="#3a3a3a" stroke-width="0.7" fill="none" stroke-linejoin="round" stroke-linecap="round" /></g>
<g transform="translate(1009.5,506.5)"><rect x="-3.5" y="-4.6" width="7" height="9.2" stroke="#3a3a3a" stroke-width="0.85" fill="#fff" /><path d="M-3.5,-2.3 H3.5 M-3.5,0 H3.5 M-3.5,2.3 H3.5 M-1.2,-4.6 V4.6 M1.2,-4.6 V4.6" stroke="#3a3a3a" stroke-width="0.7" fill="none" stroke-linejoin="round" stroke-linecap="round" /></g>
<g transform="translate(1009.5,518.9)"><rect x="-3.5" y="-4.6" width="7" height="9.2" stroke="#3a3a3a" stroke-width="0.85" fill="#fff" /><path d="M-3.5,-2.3 H3.5 M-3.5,0 H3.5 M-3.5,2.3 H3.5 M-1.2,-4.6 V4.6 M1.2,-4.6 V4.6" stroke="#3a3a3a" stroke-width="0.7" fill="none" stroke-linejoin="round" stroke-linecap="round" /></g>
<rect x="975.2" y="518" width="103" height="12" fill="#f0f0f0"/><rect x="985" y="519" width="58.4" height="7.8" fill="#cdcdcd"/>
<path d="M981.2,520.4 L978.8,522.8 L981.2,525.2" stroke="#444" stroke-width="1.0" fill="none" stroke-linejoin="round" stroke-linecap="round" />
<path d="M1063.8,520.4 L1066.2,522.8 L1063.8,525.2" stroke="#444" stroke-width="1.0" fill="none" stroke-linejoin="round" stroke-linecap="round" />
<g transform="translate(1036.5,539.6)"><rect x="-4.4" y="-3.8" width="7.6" height="6" stroke="#3c4a63" stroke-width="0.8" fill="#fff" /><rect x="-0.2" y="0.2" width="4.6" height="3.8" stroke="#3f82d6" stroke-width="0.8" fill="#cfe0f7" /><path d="M0.8,1.4 H3.4 M0.8,2.6 H3.4" stroke="#3f82d6" stroke-width="0.4" fill="none" stroke-linejoin="round" stroke-linecap="round" /></g>
<g transform="translate(1053.4,539.6)"><path d="M-4.4,3.6 V-2.2 H-1.4 L-0.4,-3.4 H2 M-4.4,3.6 H4 V0.6" stroke="#c6cbd6" stroke-width="0.8" fill="#f4f4f4" stroke-linejoin="round" stroke-linecap="round" /><circle cx="3" cy="-2.4" r="1.9" stroke="#b7d0ee" stroke-width="0.6" fill="#e8f1fb"/><path d="M3,-3.4 V-1.4 M2,-2.4 H4" stroke="#9fbfe6" stroke-width="0.5" fill="none" stroke-linejoin="round" stroke-linecap="round" /></g>
<g transform="translate(1070.4,539.6)"><path d="M-3.6,-3.6 L3.6,3.6 M3.6,-3.6 L-3.6,3.6" stroke="#f2ad7e" stroke-width="0.9" fill="none" stroke-linejoin="round" stroke-linecap="round" /></g>
<g transform="translate(980,556.6)"><path d="M-1.7,-0.9 L1.7,-0.9 L0,0.9 Z" fill="#333"/></g>
<g transform="translate(980.6,569)"><path d="M-2.4,-2 Q-2.4,-2.8 -1.6,-2.8 H1.2 V2.6 H-1.6 Q-2.4,2.6 -2.4,1.8 Z M1.2,-2.8 L2.6,-2 V1.8 L1.2,2.6" stroke="#4d4d4d" stroke-width="0.7" fill="none" stroke-linejoin="round" stroke-linecap="round" /></g>
<g transform="translate(985.7,598.6)"><rect x="-3.8" y="-3" width="5.6" height="4.4" stroke="#4d4d4d" stroke-width="0.7" fill="#f0f0f0" /><rect x="-1.6" y="-1" width="5.6" height="4.4" stroke="#4d4d4d" stroke-width="0.7" fill="#f0f0f0" /></g>
<line x1="992.6" y1="594" x2="992.6" y2="604" stroke="#cfcfcf" stroke-width="0.6"/>
<line x1="1065.5" y1="594" x2="1065.5" y2="604" stroke="#cfcfcf" stroke-width="0.6"/>
</svg>
<div id="tx">
<div class="t" style="left:11.5px;top:-1.70px;font-size:6.9px;color:#333;">无标题 - ARCHICAD 23</div>
<div class="t" style="left:2.5px;top:9.70px;font-size:6.5px;color:#222;letter-spacing:0.293px;">文件(<u>F</u>)</div>
<div class="t" style="left:32px;top:9.70px;font-size:6.5px;color:#222;letter-spacing:0.398px;">编辑(<u>O</u>)</div>
<div class="t" style="left:63.4px;top:9.70px;font-size:6.5px;color:#222;letter-spacing:0.228px;">视图(<u>B</u>)</div>
<div class="t" style="left:94px;top:9.70px;font-size:6.5px;color:#222;letter-spacing:0.211px;">设计(<u>I</u>)</div>
<div class="t" style="left:121.5px;top:9.70px;font-size:6.5px;color:#222;letter-spacing:0.613px;">文档(<u>N</u>)</div>
<div class="t" style="left:153px;top:9.70px;font-size:6.5px;color:#222;letter-spacing:0.398px;">选项(<u>O</u>)</div>
<div class="t" style="left:184.5px;top:9.70px;font-size:6.5px;color:#222;letter-spacing:0.195px;">团队工作(<u>T</u>)</div>
<div class="t" style="left:227.5px;top:9.70px;font-size:6.5px;color:#222;letter-spacing:0.504px;">视窗(<u>W</u>)</div>
<div class="t" style="left:260.4px;top:9.70px;font-size:6.5px;color:#222;letter-spacing:0.348px;">帮助 (<u>H</u>)</div>
<div class="t" style="left:18.8px;top:44.20px;font-size:6.6px;color:#222;letter-spacing:-0.042px;">3D窗口</div>
<div class="t" style="left:4.3px;top:59.20px;font-size:6.0px;color:#222;letter-spacing:-0.691px;">主要的:</div>
<div class="t" style="left:48.4px;top:94.70px;font-size:6.5px;color:#333;letter-spacing:0.159px;">[3. 楼层]</div>
<div class="t" style="left:217.3px;top:94.70px;font-size:6.5px;color:#333;letter-spacing:0.246px;">[洞口统计表]</div>
<div class="t" style="left:385.9px;top:94.70px;font-size:6.5px;color:#333;letter-spacing:0.235px;">[操作中心]</div>
<div class="t" style="left:554.3px;top:94.70px;font-size:6.5px;color:#222;letter-spacing:0.356px;">[3D / 选取框, 全部楼层]</div>
<div class="t" style="left:702px;top:94.70px;font-size:7.5px;color:#111;transform:translateX(-50%);font-weight:bold;">×</div>
<div class="t" style="left:723.5px;top:94.70px;font-size:6.5px;color:#333;letter-spacing:0.163px;">[北向立面图]</div>
<div class="t" style="left:0.4px;top:134.60px;font-size:6.6px;color:#222;">设计</div>
<div class="t" style="left:0px;top:436.30px;font-size:6.6px;color:#222;width:19px;overflow:hidden;">通风管</div>
<div class="t" style="left:0px;top:448.00px;font-size:6.6px;color:#222;width:19px;overflow:hidden;">排水管</div>
<div class="t" style="left:0px;top:459.80px;font-size:6.6px;color:#222;width:19px;overflow:hidden;">电缆</div>
<div class="t" style="left:0px;top:471.30px;font-size:6.6px;color:#222;width:19px;overflow:hidden;">文档</div>
<div class="t" style="left:9.7px;top:521.40px;font-size:14px;color:#b4b4b4;transform:translateX(-50%);line-height:12px;">A</div>
<div class="t" style="left:11.8px;top:537.00px;font-size:9.6px;color:#adadad;transform:translateX(-50%);">A1</div>
<div class="t" style="left:0px;top:580.60px;font-size:6.6px;color:#222;">更多</div>
<div class="t" style="left:138px;top:580.50px;font-size:6.6px;color:#aaa;transform:translateX(-50%);">无</div>
<div class="t" style="left:226.3px;top:580.50px;font-size:6.6px;color:#aaa;transform:translateX(-50%);">无</div>
<div class="t" style="left:315.72734375000005px;top:580.50px;font-size:6.5px;color:#222;transform:translateX(-50%);letter-spacing:0.255px;">1:100</div>
<div class="t" style="left:404.619140625px;top:580.50px;font-size:6.5px;color:#222;transform:translateX(-50%);letter-spacing:0.438px;">02 绘图</div>
<div class="t" style="left:493.6666666666667px;top:580.50px;font-size:6.5px;color:#222;transform:translateX(-50%);letter-spacing:0.333px;">整个模型</div>
<div class="t" style="left:582.17578125px;top:580.50px;font-size:6.5px;color:#222;transform:translateX(-50%);letter-spacing:0.352px;">03 建筑 100</div>
<div class="t" style="left:671.14609375px;top:580.50px;font-size:6.5px;color:#222;transform:translateX(-50%);letter-spacing:0.292px;">03 建筑设计</div>
<div class="t" style="left:759.9666666666666px;top:580.50px;font-size:6.5px;color:#222;transform:translateX(-50%);letter-spacing:0.333px;">没有覆盖</div>
<div class="t" style="left:848.4033203125px;top:580.50px;font-size:6.5px;color:#222;transform:translateX(-50%);letter-spacing:0.407px;">00 显示所有元素</div>
<div class="t" style="left:936.55px;top:580.50px;font-size:6.5px;color:#222;transform:translateX(-50%);letter-spacing:0.500px;">简单底纹</div>
<div class="t" style="left:0px;top:593.20px;font-size:6.5px;color:#222;letter-spacing:0.158px;">点击一个元素或划取一个选择区。按住Ctrl+Shift 在元素和子元素切换选择。</div>
<div class="t" style="left:1006.8px;top:102.60px;font-size:6.75px;color:#a0a0a0;">在当前楼层下</div>
<div class="t" style="left:976.8px;top:137.20px;font-size:6.6px;color:#4a4a4a;letter-spacing:0.384px;">参照:</div>
<div class="t" style="left:976.8px;top:165.50px;font-size:6.6px;color:#4a4a4a;letter-spacing:0.384px;">活动:</div>
<div class="t" style="left:1011.6px;top:240.10px;font-size:6.65px;color:#222;">3. 楼层</div>
<div class="t" style="left:1011.6px;top:252.50px;font-size:6.65px;color:#222;">2. 楼层</div>
<div class="t" style="left:1011.6px;top:264.90px;font-size:6.65px;color:#222;">1. 首层</div>
<div class="t" style="left:1005.6px;top:277.30px;font-size:6.65px;color:#222;">剖面图</div>
<div class="t" style="left:1005.6px;top:289.70px;font-size:6.65px;color:#222;">立面图</div>
<div class="t" style="left:1011.6px;top:302.10px;font-size:6.65px;color:#222;width:58px;overflow:hidden;">北向立面图 (自动重</div>
<div class="t" style="left:1011.6px;top:314.50px;font-size:6.65px;color:#222;width:58px;overflow:hidden;">东向立面图 (自动重</div>
<div class="t" style="left:1011.6px;top:326.90px;font-size:6.65px;color:#222;width:58px;overflow:hidden;">南向立面图 (自动重</div>
<div class="t" style="left:1011.6px;top:339.30px;font-size:6.65px;color:#222;width:58px;overflow:hidden;">西向立面图 (自动重</div>
<div class="t" style="left:1005.6px;top:351.70px;font-size:6.65px;color:#222;">室内立面图</div>
<div class="t" style="left:1005.6px;top:364.10px;font-size:6.65px;color:#222;">工作图</div>
<div class="t" style="left:1005.6px;top:376.50px;font-size:6.65px;color:#222;">详图</div>
<div class="t" style="left:1005.6px;top:388.90px;font-size:6.65px;color:#222;">3D文档</div>
<div class="t" style="left:1005.8px;top:401.30px;font-size:6.65px;color:#222;">3D</div>
<div class="t" style="left:1011.8px;top:413.70px;font-size:6.65px;color:#111;">普通透视图</div>
<div class="t" style="left:1011.8px;top:426.10px;font-size:6.65px;color:#222;">普通轴测图</div>
<div class="t" style="left:1005.8px;top:438.50px;font-size:6.65px;color:#222;">清单</div>
<div class="t" style="left:1011.8px;top:450.90px;font-size:6.65px;color:#222;">元素</div>
<div class="t" style="left:1017.6px;top:463.30px;font-size:6.65px;color:#222;width:51.9px;overflow:hidden;"><span style="display:inline-block;width:23.3px;letter-spacing:0.28px">IES-01</span>墙壁一览表</div>
<div class="t" style="left:1017.6px;top:475.70px;font-size:6.65px;color:#222;width:51.9px;overflow:hidden;"><span style="display:inline-block;width:23.3px;letter-spacing:0.28px">IES-02</span>所有的开洞</div>
<div class="t" style="left:1017.6px;top:488.10px;font-size:6.65px;color:#222;width:51.9px;overflow:hidden;"><span style="display:inline-block;width:23.3px;letter-spacing:0.28px">IES-03</span>门一览表</div>
<div class="t" style="left:1017.6px;top:500.50px;font-size:6.65px;color:#222;width:51.9px;overflow:hidden;"><span style="display:inline-block;width:23.3px;letter-spacing:0.28px">IES-04</span>窗一览表</div>
<div class="t" style="left:1017.6px;top:512.90px;font-size:6.65px;color:#222;width:51.9px;overflow:hidden;height:5.2px;"><span style="display:inline-block;width:23.3px;letter-spacing:0.28px">IES-05</span>对象在录</div>
<div class="t" style="left:986.9px;top:550.40px;font-size:6.6px;color:#222;">属性</div>
<div class="t" style="left:1027.3px;top:563.00px;font-size:6.65px;color:#222;transform:translateX(-50%);">普通透视图</div>
<div class="t" style="left:1027.3722656250002px;top:575.90px;font-size:6.5px;color:#222;transform:translateX(-50%);letter-spacing:-0.055px;">设置...</div>
<div class="t" style="left:1002px;top:592.70px;font-size:6.6px;color:#b4b4b4;letter-spacing:0.286px;">GRAPHISOFT ID</div>
</div>
</body></html>
